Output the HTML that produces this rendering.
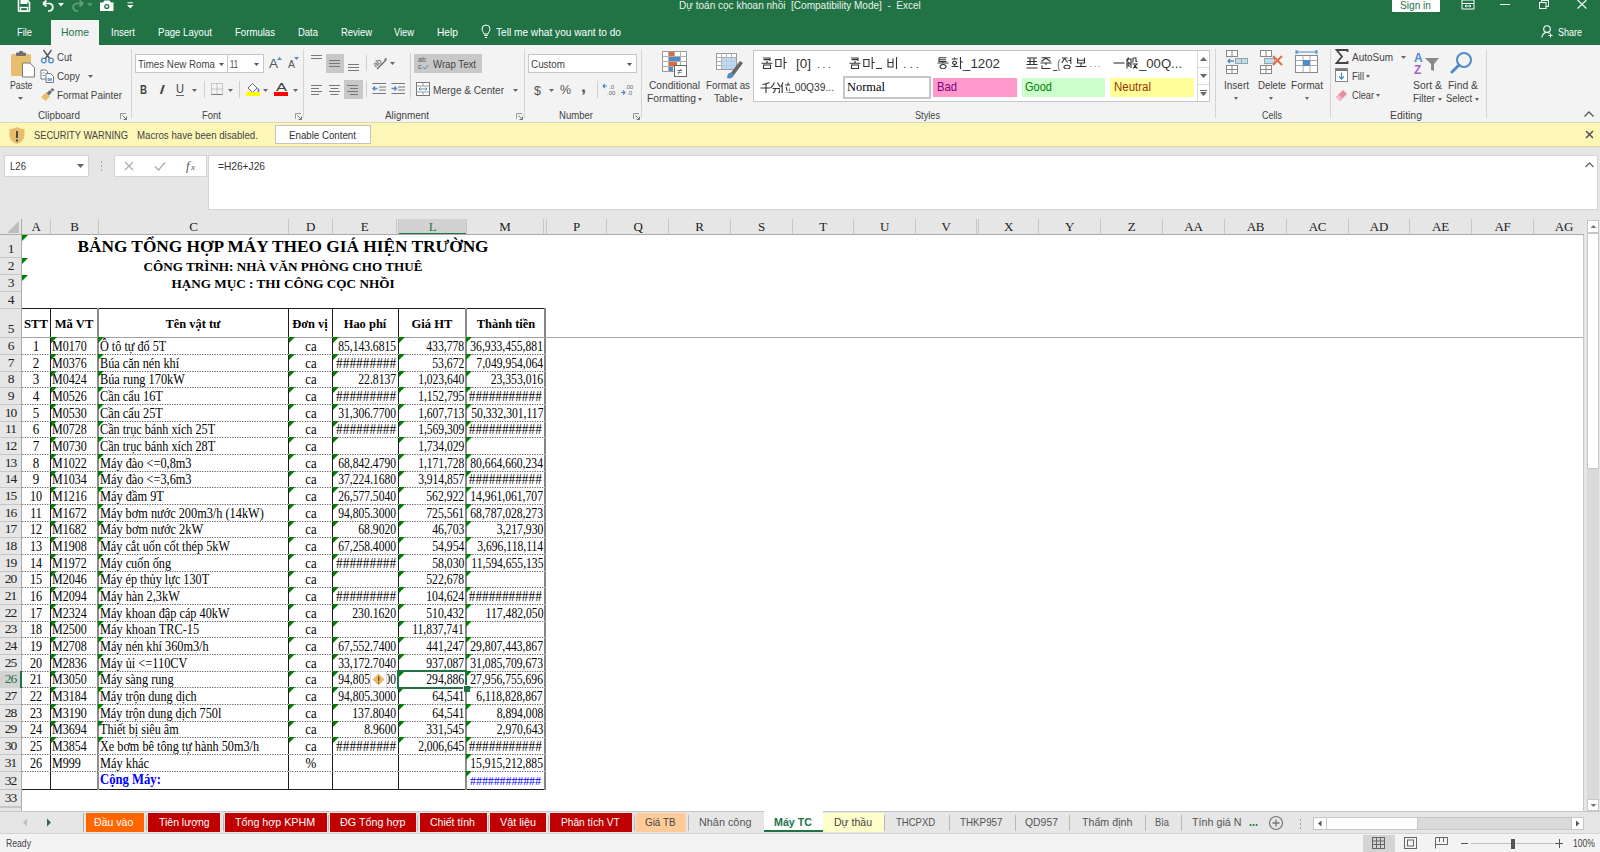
<!DOCTYPE html>
<html><head><meta charset="utf-8"><title>Excel</title>
<style>
*{margin:0;padding:0;box-sizing:border-box}
html,body{width:1600px;height:852px;overflow:hidden;background:#fff}
.r{position:absolute;display:block}
.t{position:absolute;white-space:pre}
</style></head><body>
<div class="r" style="left:0px;top:0px;width:1600px;height:45px;background:#217346;"></div><div class="r" style="left:0px;top:45px;width:1600px;height:77px;background:#F3F3F3;"></div><div class="r" style="left:0px;top:122px;width:1600px;height:1px;background:#DCD9B4;"></div><div class="r" style="left:0px;top:123px;width:1600px;height:23px;background:#FCF7B6;"></div><div class="r" style="left:0px;top:146px;width:1600px;height:1px;background:#DDD79C;"></div><div class="r" style="left:0px;top:147px;width:1600px;height:72px;background:#E6E6E6;"></div><div class="r" style="left:0px;top:219px;width:1587px;height:16px;background:#E6E6E6;"></div><div class="r" style="left:0px;top:235px;width:21px;height:576px;background:#E6E6E6;"></div><div class="r" style="left:22px;top:235px;width:1562px;height:576px;background:#FFFFFF;"></div><div class="r" style="left:399px;top:219px;width:67px;height:15px;background:#D2D2D2;"></div><div class="r" style="left:399px;top:233px;width:67px;height:2px;background:#217346;"></div><div class="r" style="left:0px;top:234px;width:1584px;height:1px;background:#ABABAB;"></div><div class="r" style="left:50px;top:219px;width:1px;height:15px;background:#C6C6C6;"></div><div class="r" style="left:98px;top:219px;width:1px;height:15px;background:#C6C6C6;"></div><div class="r" style="left:288px;top:219px;width:1px;height:15px;background:#C6C6C6;"></div><div class="r" style="left:332px;top:219px;width:1px;height:15px;background:#C6C6C6;"></div><div class="r" style="left:396px;top:219px;width:1px;height:15px;background:#C6C6C6;"></div><div class="r" style="left:466px;top:219px;width:1px;height:15px;background:#C6C6C6;"></div><div class="r" style="left:543px;top:219px;width:1px;height:15px;background:#C6C6C6;"></div><div class="r" style="left:606px;top:219px;width:1px;height:15px;background:#C6C6C6;"></div><div class="r" style="left:668px;top:219px;width:1px;height:15px;background:#C6C6C6;"></div><div class="r" style="left:730px;top:219px;width:1px;height:15px;background:#C6C6C6;"></div><div class="r" style="left:792px;top:219px;width:1px;height:15px;background:#C6C6C6;"></div><div class="r" style="left:853px;top:219px;width:1px;height:15px;background:#C6C6C6;"></div><div class="r" style="left:915px;top:219px;width:1px;height:15px;background:#C6C6C6;"></div><div class="r" style="left:976px;top:219px;width:1px;height:15px;background:#C6C6C6;"></div><div class="r" style="left:1038px;top:219px;width:1px;height:15px;background:#C6C6C6;"></div><div class="r" style="left:1100px;top:219px;width:1px;height:15px;background:#C6C6C6;"></div><div class="r" style="left:1162px;top:219px;width:1px;height:15px;background:#C6C6C6;"></div><div class="r" style="left:1224px;top:219px;width:1px;height:15px;background:#C6C6C6;"></div><div class="r" style="left:1286px;top:219px;width:1px;height:15px;background:#C6C6C6;"></div><div class="r" style="left:1348px;top:219px;width:1px;height:15px;background:#C6C6C6;"></div><div class="r" style="left:1409px;top:219px;width:1px;height:15px;background:#C6C6C6;"></div><div class="r" style="left:1471px;top:219px;width:1px;height:15px;background:#C6C6C6;"></div><div class="r" style="left:1533px;top:219px;width:1px;height:15px;background:#C6C6C6;"></div><div class="r" style="left:398px;top:219px;width:1px;height:15px;background:#C6C6C6;"></div><div class="r" style="left:546px;top:219px;width:1px;height:15px;background:#C6C6C6;"></div><div class="r" style="left:978px;top:219px;width:1px;height:15px;background:#C6C6C6;"></div><div class="r" style="left:21px;top:219px;width:1px;height:592px;background:#ABABAB;"></div><div class="t" style="top:220.11px;font:13px/13px 'Liberation Serif',serif;color:#222;letter-spacing:-0.2px;left:-4.00px;width:80px;text-align:center;">A</div><div class="t" style="top:220.11px;font:13px/13px 'Liberation Serif',serif;color:#222;letter-spacing:-0.2px;left:34.50px;width:80px;text-align:center;">B</div><div class="t" style="top:220.11px;font:13px/13px 'Liberation Serif',serif;color:#222;letter-spacing:-0.2px;left:153.50px;width:80px;text-align:center;">C</div><div class="t" style="top:220.11px;font:13px/13px 'Liberation Serif',serif;color:#222;letter-spacing:-0.2px;left:270.50px;width:80px;text-align:center;">D</div><div class="t" style="top:220.11px;font:13px/13px 'Liberation Serif',serif;color:#222;letter-spacing:-0.2px;left:324.50px;width:80px;text-align:center;">E</div><div class="t" style="top:220.11px;font:13px/13px 'Liberation Serif',serif;color:#217346;letter-spacing:-0.2px;left:392.50px;width:80px;text-align:center;">L</div><div class="t" style="top:220.11px;font:13px/13px 'Liberation Serif',serif;color:#222;letter-spacing:-0.2px;left:465.00px;width:80px;text-align:center;">M</div><div class="t" style="top:220.11px;font:13px/13px 'Liberation Serif',serif;color:#222;letter-spacing:-0.2px;left:536.50px;width:80px;text-align:center;">P</div><div class="t" style="top:220.11px;font:13px/13px 'Liberation Serif',serif;color:#222;letter-spacing:-0.2px;left:598.00px;width:80px;text-align:center;">Q</div><div class="t" style="top:220.11px;font:13px/13px 'Liberation Serif',serif;color:#222;letter-spacing:-0.2px;left:659.50px;width:80px;text-align:center;">R</div><div class="t" style="top:220.11px;font:13px/13px 'Liberation Serif',serif;color:#222;letter-spacing:-0.2px;left:721.50px;width:80px;text-align:center;">S</div><div class="t" style="top:220.11px;font:13px/13px 'Liberation Serif',serif;color:#222;letter-spacing:-0.2px;left:783.00px;width:80px;text-align:center;">T</div><div class="t" style="top:220.11px;font:13px/13px 'Liberation Serif',serif;color:#222;letter-spacing:-0.2px;left:844.50px;width:80px;text-align:center;">U</div><div class="t" style="top:220.11px;font:13px/13px 'Liberation Serif',serif;color:#222;letter-spacing:-0.2px;left:906.00px;width:80px;text-align:center;">V</div><div class="t" style="top:220.11px;font:13px/13px 'Liberation Serif',serif;color:#222;letter-spacing:-0.2px;left:968.50px;width:80px;text-align:center;">X</div><div class="t" style="top:220.11px;font:13px/13px 'Liberation Serif',serif;color:#222;letter-spacing:-0.2px;left:1029.50px;width:80px;text-align:center;">Y</div><div class="t" style="top:220.11px;font:13px/13px 'Liberation Serif',serif;color:#222;letter-spacing:-0.2px;left:1091.50px;width:80px;text-align:center;">Z</div><div class="t" style="top:220.11px;font:13px/13px 'Liberation Serif',serif;color:#222;letter-spacing:-0.2px;left:1153.50px;width:80px;text-align:center;">AA</div><div class="t" style="top:220.11px;font:13px/13px 'Liberation Serif',serif;color:#222;letter-spacing:-0.2px;left:1215.50px;width:80px;text-align:center;">AB</div><div class="t" style="top:220.11px;font:13px/13px 'Liberation Serif',serif;color:#222;letter-spacing:-0.2px;left:1277.50px;width:80px;text-align:center;">AC</div><div class="t" style="top:220.11px;font:13px/13px 'Liberation Serif',serif;color:#222;letter-spacing:-0.2px;left:1339.00px;width:80px;text-align:center;">AD</div><div class="t" style="top:220.11px;font:13px/13px 'Liberation Serif',serif;color:#222;letter-spacing:-0.2px;left:1400.50px;width:80px;text-align:center;">AE</div><div class="t" style="top:220.11px;font:13px/13px 'Liberation Serif',serif;color:#222;letter-spacing:-0.2px;left:1462.50px;width:80px;text-align:center;">AF</div><div class="t" style="top:220.11px;font:13px/13px 'Liberation Serif',serif;color:#222;letter-spacing:-0.2px;left:1524.00px;width:80px;text-align:center;">AG</div><svg class="r" style="left:4px;top:220px;" width="16" height="14" viewBox="0 0 16 14"><path d="M15 1 L15 13 L3 13 Z" fill="#BDBDBD"/></svg><div class="r" style="left:0px;top:257px;width:21px;height:1px;background:#C6C6C6;"></div><div class="t" style="top:242.49px;font:13.5px/13.5px 'Liberation Serif',serif;color:#222;letter-spacing:-1.0px;left:0.00px;width:22px;text-align:center;text-indent:-1px;">1</div><div class="r" style="left:0px;top:274px;width:21px;height:1px;background:#C6C6C6;"></div><div class="t" style="top:259.49px;font:13.5px/13.5px 'Liberation Serif',serif;color:#222;letter-spacing:-1.0px;left:0.00px;width:22px;text-align:center;text-indent:-1px;">2</div><div class="r" style="left:0px;top:291px;width:21px;height:1px;background:#C6C6C6;"></div><div class="t" style="top:276.49px;font:13.5px/13.5px 'Liberation Serif',serif;color:#222;letter-spacing:-1.0px;left:0.00px;width:22px;text-align:center;text-indent:-1px;">3</div><div class="r" style="left:0px;top:308px;width:21px;height:1px;background:#C6C6C6;"></div><div class="t" style="top:293.49px;font:13.5px/13.5px 'Liberation Serif',serif;color:#222;letter-spacing:-1.0px;left:0.00px;width:22px;text-align:center;text-indent:-1px;">4</div><div class="r" style="left:0px;top:337px;width:21px;height:1px;background:#C6C6C6;"></div><div class="t" style="top:321.99px;font:13.5px/13.5px 'Liberation Serif',serif;color:#222;letter-spacing:-1.0px;left:0.00px;width:22px;text-align:center;text-indent:-1px;">5</div><div class="r" style="left:0px;top:354px;width:21px;height:1px;background:#C6C6C6;"></div><div class="t" style="top:339.49px;font:13.5px/13.5px 'Liberation Serif',serif;color:#222;letter-spacing:-1.0px;left:0.00px;width:22px;text-align:center;text-indent:-1px;">6</div><div class="r" style="left:0px;top:371px;width:21px;height:1px;background:#C6C6C6;"></div><div class="t" style="top:356.49px;font:13.5px/13.5px 'Liberation Serif',serif;color:#222;letter-spacing:-1.0px;left:0.00px;width:22px;text-align:center;text-indent:-1px;">7</div><div class="r" style="left:0px;top:387px;width:21px;height:1px;background:#C6C6C6;"></div><div class="t" style="top:372.49px;font:13.5px/13.5px 'Liberation Serif',serif;color:#222;letter-spacing:-1.0px;left:0.00px;width:22px;text-align:center;text-indent:-1px;">8</div><div class="r" style="left:0px;top:404px;width:21px;height:1px;background:#C6C6C6;"></div><div class="t" style="top:389.49px;font:13.5px/13.5px 'Liberation Serif',serif;color:#222;letter-spacing:-1.0px;left:0.00px;width:22px;text-align:center;text-indent:-1px;">9</div><div class="r" style="left:0px;top:421px;width:21px;height:1px;background:#C6C6C6;"></div><div class="t" style="top:406.49px;font:13.5px/13.5px 'Liberation Serif',serif;color:#222;letter-spacing:-1.0px;left:0.00px;width:22px;text-align:center;text-indent:-1px;">10</div><div class="r" style="left:0px;top:437px;width:21px;height:1px;background:#C6C6C6;"></div><div class="t" style="top:422.49px;font:13.5px/13.5px 'Liberation Serif',serif;color:#222;letter-spacing:-1.0px;left:0.00px;width:22px;text-align:center;text-indent:-1px;">11</div><div class="r" style="left:0px;top:454px;width:21px;height:1px;background:#C6C6C6;"></div><div class="t" style="top:439.49px;font:13.5px/13.5px 'Liberation Serif',serif;color:#222;letter-spacing:-1.0px;left:0.00px;width:22px;text-align:center;text-indent:-1px;">12</div><div class="r" style="left:0px;top:471px;width:21px;height:1px;background:#C6C6C6;"></div><div class="t" style="top:456.49px;font:13.5px/13.5px 'Liberation Serif',serif;color:#222;letter-spacing:-1.0px;left:0.00px;width:22px;text-align:center;text-indent:-1px;">13</div><div class="r" style="left:0px;top:487px;width:21px;height:1px;background:#C6C6C6;"></div><div class="t" style="top:472.49px;font:13.5px/13.5px 'Liberation Serif',serif;color:#222;letter-spacing:-1.0px;left:0.00px;width:22px;text-align:center;text-indent:-1px;">14</div><div class="r" style="left:0px;top:504px;width:21px;height:1px;background:#C6C6C6;"></div><div class="t" style="top:489.49px;font:13.5px/13.5px 'Liberation Serif',serif;color:#222;letter-spacing:-1.0px;left:0.00px;width:22px;text-align:center;text-indent:-1px;">15</div><div class="r" style="left:0px;top:521px;width:21px;height:1px;background:#C6C6C6;"></div><div class="t" style="top:506.49px;font:13.5px/13.5px 'Liberation Serif',serif;color:#222;letter-spacing:-1.0px;left:0.00px;width:22px;text-align:center;text-indent:-1px;">16</div><div class="r" style="left:0px;top:537px;width:21px;height:1px;background:#C6C6C6;"></div><div class="t" style="top:522.49px;font:13.5px/13.5px 'Liberation Serif',serif;color:#222;letter-spacing:-1.0px;left:0.00px;width:22px;text-align:center;text-indent:-1px;">17</div><div class="r" style="left:0px;top:554px;width:21px;height:1px;background:#C6C6C6;"></div><div class="t" style="top:539.49px;font:13.5px/13.5px 'Liberation Serif',serif;color:#222;letter-spacing:-1.0px;left:0.00px;width:22px;text-align:center;text-indent:-1px;">18</div><div class="r" style="left:0px;top:571px;width:21px;height:1px;background:#C6C6C6;"></div><div class="t" style="top:556.49px;font:13.5px/13.5px 'Liberation Serif',serif;color:#222;letter-spacing:-1.0px;left:0.00px;width:22px;text-align:center;text-indent:-1px;">19</div><div class="r" style="left:0px;top:587px;width:21px;height:1px;background:#C6C6C6;"></div><div class="t" style="top:572.49px;font:13.5px/13.5px 'Liberation Serif',serif;color:#222;letter-spacing:-1.0px;left:0.00px;width:22px;text-align:center;text-indent:-1px;">20</div><div class="r" style="left:0px;top:604px;width:21px;height:1px;background:#C6C6C6;"></div><div class="t" style="top:589.49px;font:13.5px/13.5px 'Liberation Serif',serif;color:#222;letter-spacing:-1.0px;left:0.00px;width:22px;text-align:center;text-indent:-1px;">21</div><div class="r" style="left:0px;top:621px;width:21px;height:1px;background:#C6C6C6;"></div><div class="t" style="top:606.49px;font:13.5px/13.5px 'Liberation Serif',serif;color:#222;letter-spacing:-1.0px;left:0.00px;width:22px;text-align:center;text-indent:-1px;">22</div><div class="r" style="left:0px;top:637px;width:21px;height:1px;background:#C6C6C6;"></div><div class="t" style="top:622.49px;font:13.5px/13.5px 'Liberation Serif',serif;color:#222;letter-spacing:-1.0px;left:0.00px;width:22px;text-align:center;text-indent:-1px;">23</div><div class="r" style="left:0px;top:654px;width:21px;height:1px;background:#C6C6C6;"></div><div class="t" style="top:639.49px;font:13.5px/13.5px 'Liberation Serif',serif;color:#222;letter-spacing:-1.0px;left:0.00px;width:22px;text-align:center;text-indent:-1px;">24</div><div class="r" style="left:0px;top:671px;width:21px;height:1px;background:#C6C6C6;"></div><div class="t" style="top:656.49px;font:13.5px/13.5px 'Liberation Serif',serif;color:#222;letter-spacing:-1.0px;left:0.00px;width:22px;text-align:center;text-indent:-1px;">25</div><div class="r" style="left:0px;top:687px;width:21px;height:1px;background:#C6C6C6;"></div><div class="t" style="top:672.49px;font:13.5px/13.5px 'Liberation Serif',serif;color:#217346;letter-spacing:-1.0px;left:0.00px;width:22px;text-align:center;text-indent:-1px;">26</div><div class="r" style="left:0px;top:704px;width:21px;height:1px;background:#C6C6C6;"></div><div class="t" style="top:689.49px;font:13.5px/13.5px 'Liberation Serif',serif;color:#222;letter-spacing:-1.0px;left:0.00px;width:22px;text-align:center;text-indent:-1px;">27</div><div class="r" style="left:0px;top:721px;width:21px;height:1px;background:#C6C6C6;"></div><div class="t" style="top:706.49px;font:13.5px/13.5px 'Liberation Serif',serif;color:#222;letter-spacing:-1.0px;left:0.00px;width:22px;text-align:center;text-indent:-1px;">28</div><div class="r" style="left:0px;top:737px;width:21px;height:1px;background:#C6C6C6;"></div><div class="t" style="top:722.49px;font:13.5px/13.5px 'Liberation Serif',serif;color:#222;letter-spacing:-1.0px;left:0.00px;width:22px;text-align:center;text-indent:-1px;">29</div><div class="r" style="left:0px;top:754px;width:21px;height:1px;background:#C6C6C6;"></div><div class="t" style="top:739.49px;font:13.5px/13.5px 'Liberation Serif',serif;color:#222;letter-spacing:-1.0px;left:0.00px;width:22px;text-align:center;text-indent:-1px;">30</div><div class="r" style="left:0px;top:771px;width:21px;height:1px;background:#C6C6C6;"></div><div class="t" style="top:756.49px;font:13.5px/13.5px 'Liberation Serif',serif;color:#222;letter-spacing:-1.0px;left:0.00px;width:22px;text-align:center;text-indent:-1px;">31</div><div class="r" style="left:0px;top:789px;width:21px;height:1px;background:#C6C6C6;"></div><div class="t" style="top:774.49px;font:13.5px/13.5px 'Liberation Serif',serif;color:#222;letter-spacing:-1.0px;left:0.00px;width:22px;text-align:center;text-indent:-1px;">32</div><div class="r" style="left:0px;top:806px;width:21px;height:1px;background:#C6C6C6;"></div><div class="t" style="top:791.49px;font:13.5px/13.5px 'Liberation Serif',serif;color:#222;letter-spacing:-1.0px;left:0.00px;width:22px;text-align:center;text-indent:-1px;">33</div><div class="r" style="left:0px;top:671px;width:21px;height:17px;background:#D2D2D2;"></div><div class="r" style="left:20px;top:671px;width:2px;height:17px;background:#217346;"></div><div class="t" style="top:672.49px;font:13.5px/13.5px 'Liberation Serif',serif;color:#217346;letter-spacing:-1.0px;left:0.00px;width:22px;text-align:center;text-indent:-1px;">26</div><div class="r" style="left:0px;top:807px;width:21px;height:1px;background:#C6C6C6;"></div><div class="r" style="left:22px;top:337px;width:1562px;height:1px;background:#A6A6A6;"></div><div class="r" style="left:1584px;top:235px;width:3px;height:576px;background:#E6E6E6;"></div><div class="r" style="left:1587px;top:219px;width:13px;height:592px;background:#E6E6E6;"></div><div class="r" style="left:1587px;top:220px;width:12px;height:13px;background:#FFFFFF;border:1px solid #C6C6C6;"></div><svg class="r" style="left:1589px;top:222px;" width="9" height="9" viewBox="0 0 9 9"><path d="M1.5 6 L4.5 3 L7.5 6 Z" fill="#777"/></svg><div class="r" style="left:1587px;top:233px;width:12px;height:578px;background:#DADADA;"></div><div class="r" style="left:1587px;top:233px;width:12px;height:236px;background:#FFFFFF;border:1px solid #C6C6C6;"></div><div class="r" style="left:1587px;top:799px;width:12px;height:12px;background:#FFFFFF;border:1px solid #C6C6C6;"></div><svg class="r" style="left:1589px;top:801px;" width="9" height="9" viewBox="0 0 9 9"><path d="M1.5 3 L4.5 6 L7.5 3 Z" fill="#777"/></svg><div class="r" style="left:1583px;top:235px;width:1px;height:577px;background:#C6C6C6;"></div><div class="t" style="top:238.11px;font:bold 17.3px/17.3px 'Liberation Serif',serif;color:#000;left:-17.00px;width:600px;text-align:center;">BẢNG TỔNG HỢP MÁY THEO GIÁ HIỆN TRƯỜNG</div><div class="t" style="top:259.89px;font:bold 13.15px/13.15px 'Liberation Serif',serif;color:#000;left:-17.00px;width:600px;text-align:center;">CÔNG TRÌNH: NHÀ VĂN PHÒNG CHO THUÊ</div><div class="t" style="top:276.75px;font:bold 13.2px/13.2px 'Liberation Serif',serif;color:#000;left:-17.00px;width:600px;text-align:center;">HẠNG MỤC : THI CÔNG CỌC NHỒI</div><svg class="r" style="left:22px;top:235px;" width="6" height="6" viewBox="0 0 6 6"><path d="M0 0 L6 0 L0 6 Z" fill="#008000"/></svg><svg class="r" style="left:22px;top:258px;" width="6" height="6" viewBox="0 0 6 6"><path d="M0 0 L6 0 L0 6 Z" fill="#008000"/></svg><svg class="r" style="left:22px;top:275px;" width="6" height="6" viewBox="0 0 6 6"><path d="M0 0 L6 0 L0 6 Z" fill="#008000"/></svg><div class="r" style="left:22px;top:308px;width:524px;height:1px;background:#1a1a1a;"></div><div class="r" style="left:22px;top:789px;width:524px;height:1px;background:#1a1a1a;"></div><div class="r" style="left:50px;top:308px;width:1px;height:482px;background:#1a1a1a;"></div><div class="r" style="left:97px;top:308px;width:2px;height:482px;background:#8c8c8c;"></div><div class="r" style="left:288px;top:308px;width:1px;height:482px;background:#1a1a1a;"></div><div class="r" style="left:332px;top:308px;width:1px;height:482px;background:#1a1a1a;"></div><div class="r" style="left:398px;top:308px;width:1px;height:482px;background:#1a1a1a;"></div><div class="r" style="left:465px;top:308px;width:2px;height:482px;background:#8c8c8c;"></div><div class="r" style="left:544px;top:308px;width:2px;height:482px;background:#858585;"></div><div class="r" style="left:22px;top:337px;width:523px;height:1px;background:#A0A0A0;"></div><div class="r" style="left:22px;top:354px;width:523px;height:1px;background:repeating-linear-gradient(90deg,#6e6e6e 0 1px,#cfcfcf 1px 3px,#6e6e6e 3px 4px,#ffffff 4px 5px);"></div><div class="r" style="left:22px;top:371px;width:523px;height:1px;background:repeating-linear-gradient(90deg,#6e6e6e 0 1px,#cfcfcf 1px 3px,#6e6e6e 3px 4px,#ffffff 4px 5px);"></div><div class="r" style="left:22px;top:387px;width:523px;height:1px;background:repeating-linear-gradient(90deg,#6e6e6e 0 1px,#cfcfcf 1px 3px,#6e6e6e 3px 4px,#ffffff 4px 5px);"></div><div class="r" style="left:22px;top:404px;width:523px;height:1px;background:repeating-linear-gradient(90deg,#6e6e6e 0 1px,#cfcfcf 1px 3px,#6e6e6e 3px 4px,#ffffff 4px 5px);"></div><div class="r" style="left:22px;top:421px;width:523px;height:1px;background:repeating-linear-gradient(90deg,#6e6e6e 0 1px,#cfcfcf 1px 3px,#6e6e6e 3px 4px,#ffffff 4px 5px);"></div><div class="r" style="left:22px;top:437px;width:523px;height:1px;background:repeating-linear-gradient(90deg,#6e6e6e 0 1px,#cfcfcf 1px 3px,#6e6e6e 3px 4px,#ffffff 4px 5px);"></div><div class="r" style="left:22px;top:454px;width:523px;height:1px;background:repeating-linear-gradient(90deg,#6e6e6e 0 1px,#cfcfcf 1px 3px,#6e6e6e 3px 4px,#ffffff 4px 5px);"></div><div class="r" style="left:22px;top:471px;width:523px;height:1px;background:repeating-linear-gradient(90deg,#6e6e6e 0 1px,#cfcfcf 1px 3px,#6e6e6e 3px 4px,#ffffff 4px 5px);"></div><div class="r" style="left:22px;top:487px;width:523px;height:1px;background:repeating-linear-gradient(90deg,#6e6e6e 0 1px,#cfcfcf 1px 3px,#6e6e6e 3px 4px,#ffffff 4px 5px);"></div><div class="r" style="left:22px;top:504px;width:523px;height:1px;background:repeating-linear-gradient(90deg,#6e6e6e 0 1px,#cfcfcf 1px 3px,#6e6e6e 3px 4px,#ffffff 4px 5px);"></div><div class="r" style="left:22px;top:521px;width:523px;height:1px;background:repeating-linear-gradient(90deg,#6e6e6e 0 1px,#cfcfcf 1px 3px,#6e6e6e 3px 4px,#ffffff 4px 5px);"></div><div class="r" style="left:22px;top:537px;width:523px;height:1px;background:repeating-linear-gradient(90deg,#6e6e6e 0 1px,#cfcfcf 1px 3px,#6e6e6e 3px 4px,#ffffff 4px 5px);"></div><div class="r" style="left:22px;top:554px;width:523px;height:1px;background:repeating-linear-gradient(90deg,#6e6e6e 0 1px,#cfcfcf 1px 3px,#6e6e6e 3px 4px,#ffffff 4px 5px);"></div><div class="r" style="left:22px;top:571px;width:523px;height:1px;background:repeating-linear-gradient(90deg,#6e6e6e 0 1px,#cfcfcf 1px 3px,#6e6e6e 3px 4px,#ffffff 4px 5px);"></div><div class="r" style="left:22px;top:587px;width:523px;height:1px;background:repeating-linear-gradient(90deg,#6e6e6e 0 1px,#cfcfcf 1px 3px,#6e6e6e 3px 4px,#ffffff 4px 5px);"></div><div class="r" style="left:22px;top:604px;width:523px;height:1px;background:repeating-linear-gradient(90deg,#6e6e6e 0 1px,#cfcfcf 1px 3px,#6e6e6e 3px 4px,#ffffff 4px 5px);"></div><div class="r" style="left:22px;top:621px;width:523px;height:1px;background:repeating-linear-gradient(90deg,#6e6e6e 0 1px,#cfcfcf 1px 3px,#6e6e6e 3px 4px,#ffffff 4px 5px);"></div><div class="r" style="left:22px;top:637px;width:523px;height:1px;background:repeating-linear-gradient(90deg,#6e6e6e 0 1px,#cfcfcf 1px 3px,#6e6e6e 3px 4px,#ffffff 4px 5px);"></div><div class="r" style="left:22px;top:654px;width:523px;height:1px;background:repeating-linear-gradient(90deg,#6e6e6e 0 1px,#cfcfcf 1px 3px,#6e6e6e 3px 4px,#ffffff 4px 5px);"></div><div class="r" style="left:22px;top:671px;width:523px;height:1px;background:repeating-linear-gradient(90deg,#6e6e6e 0 1px,#cfcfcf 1px 3px,#6e6e6e 3px 4px,#ffffff 4px 5px);"></div><div class="r" style="left:22px;top:687px;width:523px;height:1px;background:repeating-linear-gradient(90deg,#6e6e6e 0 1px,#cfcfcf 1px 3px,#6e6e6e 3px 4px,#ffffff 4px 5px);"></div><div class="r" style="left:22px;top:704px;width:523px;height:1px;background:repeating-linear-gradient(90deg,#6e6e6e 0 1px,#cfcfcf 1px 3px,#6e6e6e 3px 4px,#ffffff 4px 5px);"></div><div class="r" style="left:22px;top:721px;width:523px;height:1px;background:repeating-linear-gradient(90deg,#6e6e6e 0 1px,#cfcfcf 1px 3px,#6e6e6e 3px 4px,#ffffff 4px 5px);"></div><div class="r" style="left:22px;top:737px;width:523px;height:1px;background:repeating-linear-gradient(90deg,#6e6e6e 0 1px,#cfcfcf 1px 3px,#6e6e6e 3px 4px,#ffffff 4px 5px);"></div><div class="r" style="left:22px;top:754px;width:523px;height:1px;background:repeating-linear-gradient(90deg,#6e6e6e 0 1px,#cfcfcf 1px 3px,#6e6e6e 3px 4px,#ffffff 4px 5px);"></div><div class="r" style="left:22px;top:771px;width:523px;height:1px;background:repeating-linear-gradient(90deg,#6e6e6e 0 1px,#cfcfcf 1px 3px,#6e6e6e 3px 4px,#ffffff 4px 5px);"></div><div class="t" style="top:317.88px;font:bold 12.8px/12.8px 'Liberation Serif',serif;color:#000;left:-64.50px;width:200px;text-align:center;transform:scaleX(0.9920);transform-origin:50% 0;">STT</div><div class="t" style="top:317.88px;font:bold 12.8px/12.8px 'Liberation Serif',serif;color:#000;left:-26.00px;width:200px;text-align:center;transform:scaleX(0.9853);transform-origin:50% 0;">Mã VT</div><div class="t" style="top:317.88px;font:bold 12.8px/12.8px 'Liberation Serif',serif;color:#000;left:93.00px;width:200px;text-align:center;transform:scaleX(0.9678);transform-origin:50% 0;">Tên vật tư</div><div class="t" style="top:317.88px;font:bold 12.8px/12.8px 'Liberation Serif',serif;color:#000;left:210.00px;width:200px;text-align:center;transform:scaleX(0.9752);transform-origin:50% 0;">Đơn vị</div><div class="t" style="top:317.88px;font:bold 12.8px/12.8px 'Liberation Serif',serif;color:#000;left:265.00px;width:200px;text-align:center;transform:scaleX(0.9746);transform-origin:50% 0;">Hao phí</div><div class="t" style="top:317.88px;font:bold 12.8px/12.8px 'Liberation Serif',serif;color:#000;left:332.00px;width:200px;text-align:center;transform:scaleX(0.9793);transform-origin:50% 0;">Giá HT</div><div class="t" style="top:317.88px;font:bold 12.8px/12.8px 'Liberation Serif',serif;color:#000;left:405.50px;width:200px;text-align:center;transform:scaleX(0.9712);transform-origin:50% 0;">Thành tiền</div><div class="t" style="top:339.81px;font:13.6px/13.6px 'Liberation Serif',serif;color:#000;left:16.00px;width:40px;text-align:center;transform:scaleX(0.9563);transform-origin:50% 0;">1</div><div class="t" style="top:339.81px;font:13.6px/13.6px 'Liberation Serif',serif;color:#000;left:52px;transform:scaleX(0.8829);transform-origin:0 0;">M0170</div><div class="t" style="top:339.81px;font:13.6px/13.6px 'Liberation Serif',serif;color:#000;left:100px;transform:scaleX(0.8973);transform-origin:0 0;">Ô tô tự đổ 5T</div><div class="t" style="top:339.81px;font:13.6px/13.6px 'Liberation Serif',serif;color:#000;left:290.50px;width:40px;text-align:center;transform:scaleX(0.9311);transform-origin:50% 0;">ca</div><div class="t" style="top:339.81px;font:13.6px/13.6px 'Liberation Serif',serif;color:#000;right:1204.00px;text-align:right;transform:scaleX(0.8502);transform-origin:100% 0;">85,143.6815</div><div class="t" style="top:339.81px;font:13.6px/13.6px 'Liberation Serif',serif;color:#000;right:1136.00px;text-align:right;transform:scaleX(0.8584);transform-origin:100% 0;">433,778</div><div class="t" style="top:339.81px;font:13.6px/13.6px 'Liberation Serif',serif;color:#000;right:1057.00px;text-align:right;transform:scaleX(0.8551);transform-origin:100% 0;">36,933,455,881</div><svg class="r" style="left:51px;top:337px;" width="6" height="6" viewBox="0 0 6 6"><path d="M0 0 L6 0 L0 6 Z" fill="#008000"/></svg><svg class="r" style="left:98px;top:337px;" width="6" height="6" viewBox="0 0 6 6"><path d="M0 0 L6 0 L0 6 Z" fill="#008000"/></svg><svg class="r" style="left:289px;top:337px;" width="6" height="6" viewBox="0 0 6 6"><path d="M0 0 L6 0 L0 6 Z" fill="#008000"/></svg><svg class="r" style="left:333px;top:337px;" width="6" height="6" viewBox="0 0 6 6"><path d="M0 0 L6 0 L0 6 Z" fill="#008000"/></svg><svg class="r" style="left:399px;top:337px;" width="6" height="6" viewBox="0 0 6 6"><path d="M0 0 L6 0 L0 6 Z" fill="#008000"/></svg><svg class="r" style="left:466px;top:337px;" width="6" height="6" viewBox="0 0 6 6"><path d="M0 0 L6 0 L0 6 Z" fill="#008000"/></svg><div class="t" style="top:356.81px;font:13.6px/13.6px 'Liberation Serif',serif;color:#000;left:16.00px;width:40px;text-align:center;transform:scaleX(0.9563);transform-origin:50% 0;">2</div><div class="t" style="top:356.81px;font:13.6px/13.6px 'Liberation Serif',serif;color:#000;left:52px;transform:scaleX(0.8829);transform-origin:0 0;">M0376</div><div class="t" style="top:356.81px;font:13.6px/13.6px 'Liberation Serif',serif;color:#000;left:100px;transform:scaleX(0.8987);transform-origin:0 0;">Búa căn nén khí</div><div class="t" style="top:356.81px;font:13.6px/13.6px 'Liberation Serif',serif;color:#000;left:290.50px;width:40px;text-align:center;transform:scaleX(0.9311);transform-origin:50% 0;">ca</div><div class="t" style="top:356.81px;font:13.6px/13.6px 'Liberation Serif',serif;color:#000;right:1204.00px;text-align:right;transform:scaleX(0.9825);transform-origin:100% 0;">#########</div><div class="t" style="top:356.81px;font:13.6px/13.6px 'Liberation Serif',serif;color:#000;right:1136.00px;text-align:right;transform:scaleX(0.8598);transform-origin:100% 0;">53,672</div><div class="t" style="top:356.81px;font:13.6px/13.6px 'Liberation Serif',serif;color:#000;right:1057.00px;text-align:right;transform:scaleX(0.8547);transform-origin:100% 0;">7,049,954,064</div><svg class="r" style="left:51px;top:354px;" width="6" height="6" viewBox="0 0 6 6"><path d="M0 0 L6 0 L0 6 Z" fill="#008000"/></svg><svg class="r" style="left:98px;top:354px;" width="6" height="6" viewBox="0 0 6 6"><path d="M0 0 L6 0 L0 6 Z" fill="#008000"/></svg><svg class="r" style="left:289px;top:354px;" width="6" height="6" viewBox="0 0 6 6"><path d="M0 0 L6 0 L0 6 Z" fill="#008000"/></svg><svg class="r" style="left:333px;top:354px;" width="6" height="6" viewBox="0 0 6 6"><path d="M0 0 L6 0 L0 6 Z" fill="#008000"/></svg><svg class="r" style="left:399px;top:354px;" width="6" height="6" viewBox="0 0 6 6"><path d="M0 0 L6 0 L0 6 Z" fill="#008000"/></svg><svg class="r" style="left:466px;top:354px;" width="6" height="6" viewBox="0 0 6 6"><path d="M0 0 L6 0 L0 6 Z" fill="#008000"/></svg><div class="t" style="top:372.81px;font:13.6px/13.6px 'Liberation Serif',serif;color:#000;left:16.00px;width:40px;text-align:center;transform:scaleX(0.9563);transform-origin:50% 0;">3</div><div class="t" style="top:372.81px;font:13.6px/13.6px 'Liberation Serif',serif;color:#000;left:52px;transform:scaleX(0.8829);transform-origin:0 0;">M0424</div><div class="t" style="top:372.81px;font:13.6px/13.6px 'Liberation Serif',serif;color:#000;left:100px;transform:scaleX(0.9061);transform-origin:0 0;">Búa rung 170kW</div><div class="t" style="top:372.81px;font:13.6px/13.6px 'Liberation Serif',serif;color:#000;left:290.50px;width:40px;text-align:center;transform:scaleX(0.9311);transform-origin:50% 0;">ca</div><div class="t" style="top:372.81px;font:13.6px/13.6px 'Liberation Serif',serif;color:#000;right:1204.00px;text-align:right;transform:scaleX(0.8584);transform-origin:100% 0;">22.8137</div><div class="t" style="top:372.81px;font:13.6px/13.6px 'Liberation Serif',serif;color:#000;right:1136.00px;text-align:right;transform:scaleX(0.8501);transform-origin:100% 0;">1,023,640</div><div class="t" style="top:372.81px;font:13.6px/13.6px 'Liberation Serif',serif;color:#000;right:1057.00px;text-align:right;transform:scaleX(0.8590);transform-origin:100% 0;">23,353,016</div><svg class="r" style="left:51px;top:371px;" width="6" height="6" viewBox="0 0 6 6"><path d="M0 0 L6 0 L0 6 Z" fill="#008000"/></svg><svg class="r" style="left:98px;top:371px;" width="6" height="6" viewBox="0 0 6 6"><path d="M0 0 L6 0 L0 6 Z" fill="#008000"/></svg><svg class="r" style="left:289px;top:371px;" width="6" height="6" viewBox="0 0 6 6"><path d="M0 0 L6 0 L0 6 Z" fill="#008000"/></svg><svg class="r" style="left:333px;top:371px;" width="6" height="6" viewBox="0 0 6 6"><path d="M0 0 L6 0 L0 6 Z" fill="#008000"/></svg><svg class="r" style="left:399px;top:371px;" width="6" height="6" viewBox="0 0 6 6"><path d="M0 0 L6 0 L0 6 Z" fill="#008000"/></svg><svg class="r" style="left:466px;top:371px;" width="6" height="6" viewBox="0 0 6 6"><path d="M0 0 L6 0 L0 6 Z" fill="#008000"/></svg><div class="t" style="top:389.81px;font:13.6px/13.6px 'Liberation Serif',serif;color:#000;left:16.00px;width:40px;text-align:center;transform:scaleX(0.9563);transform-origin:50% 0;">4</div><div class="t" style="top:389.81px;font:13.6px/13.6px 'Liberation Serif',serif;color:#000;left:52px;transform:scaleX(0.8829);transform-origin:0 0;">M0526</div><div class="t" style="top:389.81px;font:13.6px/13.6px 'Liberation Serif',serif;color:#000;left:100px;transform:scaleX(0.9043);transform-origin:0 0;">Cần cẩu 16T</div><div class="t" style="top:389.81px;font:13.6px/13.6px 'Liberation Serif',serif;color:#000;left:290.50px;width:40px;text-align:center;transform:scaleX(0.9311);transform-origin:50% 0;">ca</div><div class="t" style="top:389.81px;font:13.6px/13.6px 'Liberation Serif',serif;color:#000;right:1204.00px;text-align:right;transform:scaleX(0.9825);transform-origin:100% 0;">#########</div><div class="t" style="top:389.81px;font:13.6px/13.6px 'Liberation Serif',serif;color:#000;right:1136.00px;text-align:right;transform:scaleX(0.8501);transform-origin:100% 0;">1,152,795</div><div class="t" style="top:389.81px;font:13.6px/13.6px 'Liberation Serif',serif;color:#000;right:1058.00px;text-align:right;transform:scaleX(0.9764);transform-origin:100% 0;">###########</div><svg class="r" style="left:51px;top:387px;" width="6" height="6" viewBox="0 0 6 6"><path d="M0 0 L6 0 L0 6 Z" fill="#008000"/></svg><svg class="r" style="left:98px;top:387px;" width="6" height="6" viewBox="0 0 6 6"><path d="M0 0 L6 0 L0 6 Z" fill="#008000"/></svg><svg class="r" style="left:289px;top:387px;" width="6" height="6" viewBox="0 0 6 6"><path d="M0 0 L6 0 L0 6 Z" fill="#008000"/></svg><svg class="r" style="left:333px;top:387px;" width="6" height="6" viewBox="0 0 6 6"><path d="M0 0 L6 0 L0 6 Z" fill="#008000"/></svg><svg class="r" style="left:399px;top:387px;" width="6" height="6" viewBox="0 0 6 6"><path d="M0 0 L6 0 L0 6 Z" fill="#008000"/></svg><svg class="r" style="left:466px;top:387px;" width="6" height="6" viewBox="0 0 6 6"><path d="M0 0 L6 0 L0 6 Z" fill="#008000"/></svg><div class="t" style="top:406.81px;font:13.6px/13.6px 'Liberation Serif',serif;color:#000;left:16.00px;width:40px;text-align:center;transform:scaleX(0.9563);transform-origin:50% 0;">5</div><div class="t" style="top:406.81px;font:13.6px/13.6px 'Liberation Serif',serif;color:#000;left:52px;transform:scaleX(0.8829);transform-origin:0 0;">M0530</div><div class="t" style="top:406.81px;font:13.6px/13.6px 'Liberation Serif',serif;color:#000;left:100px;transform:scaleX(0.9043);transform-origin:0 0;">Cần cẩu 25T</div><div class="t" style="top:406.81px;font:13.6px/13.6px 'Liberation Serif',serif;color:#000;left:290.50px;width:40px;text-align:center;transform:scaleX(0.9311);transform-origin:50% 0;">ca</div><div class="t" style="top:406.81px;font:13.6px/13.6px 'Liberation Serif',serif;color:#000;right:1204.00px;text-align:right;transform:scaleX(0.8502);transform-origin:100% 0;">31,306.7700</div><div class="t" style="top:406.81px;font:13.6px/13.6px 'Liberation Serif',serif;color:#000;right:1136.00px;text-align:right;transform:scaleX(0.8501);transform-origin:100% 0;">1,607,713</div><div class="t" style="top:406.81px;font:13.6px/13.6px 'Liberation Serif',serif;color:#000;right:1057.00px;text-align:right;transform:scaleX(0.8544);transform-origin:100% 0;">50,332,301,117</div><svg class="r" style="left:51px;top:404px;" width="6" height="6" viewBox="0 0 6 6"><path d="M0 0 L6 0 L0 6 Z" fill="#008000"/></svg><svg class="r" style="left:98px;top:404px;" width="6" height="6" viewBox="0 0 6 6"><path d="M0 0 L6 0 L0 6 Z" fill="#008000"/></svg><svg class="r" style="left:289px;top:404px;" width="6" height="6" viewBox="0 0 6 6"><path d="M0 0 L6 0 L0 6 Z" fill="#008000"/></svg><svg class="r" style="left:333px;top:404px;" width="6" height="6" viewBox="0 0 6 6"><path d="M0 0 L6 0 L0 6 Z" fill="#008000"/></svg><svg class="r" style="left:399px;top:404px;" width="6" height="6" viewBox="0 0 6 6"><path d="M0 0 L6 0 L0 6 Z" fill="#008000"/></svg><svg class="r" style="left:466px;top:404px;" width="6" height="6" viewBox="0 0 6 6"><path d="M0 0 L6 0 L0 6 Z" fill="#008000"/></svg><div class="t" style="top:422.81px;font:13.6px/13.6px 'Liberation Serif',serif;color:#000;left:16.00px;width:40px;text-align:center;transform:scaleX(0.9563);transform-origin:50% 0;">6</div><div class="t" style="top:422.81px;font:13.6px/13.6px 'Liberation Serif',serif;color:#000;left:52px;transform:scaleX(0.8829);transform-origin:0 0;">M0728</div><div class="t" style="top:422.81px;font:13.6px/13.6px 'Liberation Serif',serif;color:#000;left:100px;transform:scaleX(0.8970);transform-origin:0 0;">Cần trục bánh xích 25T</div><div class="t" style="top:422.81px;font:13.6px/13.6px 'Liberation Serif',serif;color:#000;left:290.50px;width:40px;text-align:center;transform:scaleX(0.9311);transform-origin:50% 0;">ca</div><div class="t" style="top:422.81px;font:13.6px/13.6px 'Liberation Serif',serif;color:#000;right:1204.00px;text-align:right;transform:scaleX(0.9825);transform-origin:100% 0;">#########</div><div class="t" style="top:422.81px;font:13.6px/13.6px 'Liberation Serif',serif;color:#000;right:1136.00px;text-align:right;transform:scaleX(0.8501);transform-origin:100% 0;">1,569,309</div><div class="t" style="top:422.81px;font:13.6px/13.6px 'Liberation Serif',serif;color:#000;right:1058.00px;text-align:right;transform:scaleX(0.9764);transform-origin:100% 0;">###########</div><svg class="r" style="left:51px;top:421px;" width="6" height="6" viewBox="0 0 6 6"><path d="M0 0 L6 0 L0 6 Z" fill="#008000"/></svg><svg class="r" style="left:98px;top:421px;" width="6" height="6" viewBox="0 0 6 6"><path d="M0 0 L6 0 L0 6 Z" fill="#008000"/></svg><svg class="r" style="left:289px;top:421px;" width="6" height="6" viewBox="0 0 6 6"><path d="M0 0 L6 0 L0 6 Z" fill="#008000"/></svg><svg class="r" style="left:333px;top:421px;" width="6" height="6" viewBox="0 0 6 6"><path d="M0 0 L6 0 L0 6 Z" fill="#008000"/></svg><svg class="r" style="left:399px;top:421px;" width="6" height="6" viewBox="0 0 6 6"><path d="M0 0 L6 0 L0 6 Z" fill="#008000"/></svg><svg class="r" style="left:466px;top:421px;" width="6" height="6" viewBox="0 0 6 6"><path d="M0 0 L6 0 L0 6 Z" fill="#008000"/></svg><div class="t" style="top:439.81px;font:13.6px/13.6px 'Liberation Serif',serif;color:#000;left:16.00px;width:40px;text-align:center;transform:scaleX(0.9563);transform-origin:50% 0;">7</div><div class="t" style="top:439.81px;font:13.6px/13.6px 'Liberation Serif',serif;color:#000;left:52px;transform:scaleX(0.8829);transform-origin:0 0;">M0730</div><div class="t" style="top:439.81px;font:13.6px/13.6px 'Liberation Serif',serif;color:#000;left:100px;transform:scaleX(0.8970);transform-origin:0 0;">Cần trục bánh xích 28T</div><div class="t" style="top:439.81px;font:13.6px/13.6px 'Liberation Serif',serif;color:#000;left:290.50px;width:40px;text-align:center;transform:scaleX(0.9311);transform-origin:50% 0;">ca</div><div class="t" style="top:439.81px;font:13.6px/13.6px 'Liberation Serif',serif;color:#000;right:1136.00px;text-align:right;transform:scaleX(0.8501);transform-origin:100% 0;">1,734,029</div><svg class="r" style="left:51px;top:437px;" width="6" height="6" viewBox="0 0 6 6"><path d="M0 0 L6 0 L0 6 Z" fill="#008000"/></svg><svg class="r" style="left:98px;top:437px;" width="6" height="6" viewBox="0 0 6 6"><path d="M0 0 L6 0 L0 6 Z" fill="#008000"/></svg><svg class="r" style="left:289px;top:437px;" width="6" height="6" viewBox="0 0 6 6"><path d="M0 0 L6 0 L0 6 Z" fill="#008000"/></svg><svg class="r" style="left:333px;top:437px;" width="6" height="6" viewBox="0 0 6 6"><path d="M0 0 L6 0 L0 6 Z" fill="#008000"/></svg><svg class="r" style="left:399px;top:437px;" width="6" height="6" viewBox="0 0 6 6"><path d="M0 0 L6 0 L0 6 Z" fill="#008000"/></svg><svg class="r" style="left:466px;top:437px;" width="6" height="6" viewBox="0 0 6 6"><path d="M0 0 L6 0 L0 6 Z" fill="#008000"/></svg><div class="t" style="top:456.81px;font:13.6px/13.6px 'Liberation Serif',serif;color:#000;left:16.00px;width:40px;text-align:center;transform:scaleX(0.9563);transform-origin:50% 0;">8</div><div class="t" style="top:456.81px;font:13.6px/13.6px 'Liberation Serif',serif;color:#000;left:52px;transform:scaleX(0.8829);transform-origin:0 0;">M1022</div><div class="t" style="top:456.81px;font:13.6px/13.6px 'Liberation Serif',serif;color:#000;left:100px;transform:scaleX(0.9059);transform-origin:0 0;">Máy đào &lt;=0,8m3</div><div class="t" style="top:456.81px;font:13.6px/13.6px 'Liberation Serif',serif;color:#000;left:290.50px;width:40px;text-align:center;transform:scaleX(0.9311);transform-origin:50% 0;">ca</div><div class="t" style="top:456.81px;font:13.6px/13.6px 'Liberation Serif',serif;color:#000;right:1204.00px;text-align:right;transform:scaleX(0.8502);transform-origin:100% 0;">68,842.4790</div><div class="t" style="top:456.81px;font:13.6px/13.6px 'Liberation Serif',serif;color:#000;right:1136.00px;text-align:right;transform:scaleX(0.8501);transform-origin:100% 0;">1,171,728</div><div class="t" style="top:456.81px;font:13.6px/13.6px 'Liberation Serif',serif;color:#000;right:1057.00px;text-align:right;transform:scaleX(0.8551);transform-origin:100% 0;">80,664,660,234</div><svg class="r" style="left:51px;top:454px;" width="6" height="6" viewBox="0 0 6 6"><path d="M0 0 L6 0 L0 6 Z" fill="#008000"/></svg><svg class="r" style="left:98px;top:454px;" width="6" height="6" viewBox="0 0 6 6"><path d="M0 0 L6 0 L0 6 Z" fill="#008000"/></svg><svg class="r" style="left:289px;top:454px;" width="6" height="6" viewBox="0 0 6 6"><path d="M0 0 L6 0 L0 6 Z" fill="#008000"/></svg><svg class="r" style="left:333px;top:454px;" width="6" height="6" viewBox="0 0 6 6"><path d="M0 0 L6 0 L0 6 Z" fill="#008000"/></svg><svg class="r" style="left:399px;top:454px;" width="6" height="6" viewBox="0 0 6 6"><path d="M0 0 L6 0 L0 6 Z" fill="#008000"/></svg><svg class="r" style="left:466px;top:454px;" width="6" height="6" viewBox="0 0 6 6"><path d="M0 0 L6 0 L0 6 Z" fill="#008000"/></svg><div class="t" style="top:472.81px;font:13.6px/13.6px 'Liberation Serif',serif;color:#000;left:16.00px;width:40px;text-align:center;transform:scaleX(0.9563);transform-origin:50% 0;">9</div><div class="t" style="top:472.81px;font:13.6px/13.6px 'Liberation Serif',serif;color:#000;left:52px;transform:scaleX(0.8829);transform-origin:0 0;">M1034</div><div class="t" style="top:472.81px;font:13.6px/13.6px 'Liberation Serif',serif;color:#000;left:100px;transform:scaleX(0.9059);transform-origin:0 0;">Máy đào &lt;=3,6m3</div><div class="t" style="top:472.81px;font:13.6px/13.6px 'Liberation Serif',serif;color:#000;left:290.50px;width:40px;text-align:center;transform:scaleX(0.9311);transform-origin:50% 0;">ca</div><div class="t" style="top:472.81px;font:13.6px/13.6px 'Liberation Serif',serif;color:#000;right:1204.00px;text-align:right;transform:scaleX(0.8502);transform-origin:100% 0;">37,224.1680</div><div class="t" style="top:472.81px;font:13.6px/13.6px 'Liberation Serif',serif;color:#000;right:1136.00px;text-align:right;transform:scaleX(0.8501);transform-origin:100% 0;">3,914,857</div><div class="t" style="top:472.81px;font:13.6px/13.6px 'Liberation Serif',serif;color:#000;right:1058.00px;text-align:right;transform:scaleX(0.9764);transform-origin:100% 0;">###########</div><svg class="r" style="left:51px;top:471px;" width="6" height="6" viewBox="0 0 6 6"><path d="M0 0 L6 0 L0 6 Z" fill="#008000"/></svg><svg class="r" style="left:98px;top:471px;" width="6" height="6" viewBox="0 0 6 6"><path d="M0 0 L6 0 L0 6 Z" fill="#008000"/></svg><svg class="r" style="left:289px;top:471px;" width="6" height="6" viewBox="0 0 6 6"><path d="M0 0 L6 0 L0 6 Z" fill="#008000"/></svg><svg class="r" style="left:333px;top:471px;" width="6" height="6" viewBox="0 0 6 6"><path d="M0 0 L6 0 L0 6 Z" fill="#008000"/></svg><svg class="r" style="left:399px;top:471px;" width="6" height="6" viewBox="0 0 6 6"><path d="M0 0 L6 0 L0 6 Z" fill="#008000"/></svg><svg class="r" style="left:466px;top:471px;" width="6" height="6" viewBox="0 0 6 6"><path d="M0 0 L6 0 L0 6 Z" fill="#008000"/></svg><div class="t" style="top:489.81px;font:13.6px/13.6px 'Liberation Serif',serif;color:#000;left:16.00px;width:40px;text-align:center;transform:scaleX(0.8901);transform-origin:50% 0;">10</div><div class="t" style="top:489.81px;font:13.6px/13.6px 'Liberation Serif',serif;color:#000;left:52px;transform:scaleX(0.8829);transform-origin:0 0;">M1216</div><div class="t" style="top:489.81px;font:13.6px/13.6px 'Liberation Serif',serif;color:#000;left:100px;transform:scaleX(0.9098);transform-origin:0 0;">Máy đầm 9T</div><div class="t" style="top:489.81px;font:13.6px/13.6px 'Liberation Serif',serif;color:#000;left:290.50px;width:40px;text-align:center;transform:scaleX(0.9311);transform-origin:50% 0;">ca</div><div class="t" style="top:489.81px;font:13.6px/13.6px 'Liberation Serif',serif;color:#000;right:1204.00px;text-align:right;transform:scaleX(0.8502);transform-origin:100% 0;">26,577.5040</div><div class="t" style="top:489.81px;font:13.6px/13.6px 'Liberation Serif',serif;color:#000;right:1136.00px;text-align:right;transform:scaleX(0.8584);transform-origin:100% 0;">562,922</div><div class="t" style="top:489.81px;font:13.6px/13.6px 'Liberation Serif',serif;color:#000;right:1057.00px;text-align:right;transform:scaleX(0.8551);transform-origin:100% 0;">14,961,061,707</div><svg class="r" style="left:51px;top:487px;" width="6" height="6" viewBox="0 0 6 6"><path d="M0 0 L6 0 L0 6 Z" fill="#008000"/></svg><svg class="r" style="left:98px;top:487px;" width="6" height="6" viewBox="0 0 6 6"><path d="M0 0 L6 0 L0 6 Z" fill="#008000"/></svg><svg class="r" style="left:289px;top:487px;" width="6" height="6" viewBox="0 0 6 6"><path d="M0 0 L6 0 L0 6 Z" fill="#008000"/></svg><svg class="r" style="left:333px;top:487px;" width="6" height="6" viewBox="0 0 6 6"><path d="M0 0 L6 0 L0 6 Z" fill="#008000"/></svg><svg class="r" style="left:399px;top:487px;" width="6" height="6" viewBox="0 0 6 6"><path d="M0 0 L6 0 L0 6 Z" fill="#008000"/></svg><svg class="r" style="left:466px;top:487px;" width="6" height="6" viewBox="0 0 6 6"><path d="M0 0 L6 0 L0 6 Z" fill="#008000"/></svg><div class="t" style="top:506.81px;font:13.6px/13.6px 'Liberation Serif',serif;color:#000;left:16.00px;width:40px;text-align:center;transform:scaleX(0.8871);transform-origin:50% 0;">11</div><div class="t" style="top:506.81px;font:13.6px/13.6px 'Liberation Serif',serif;color:#000;left:52px;transform:scaleX(0.8829);transform-origin:0 0;">M1672</div><div class="t" style="top:506.81px;font:13.6px/13.6px 'Liberation Serif',serif;color:#000;left:100px;transform:scaleX(0.9042);transform-origin:0 0;">Máy bơm nước 200m3/h (14kW)</div><div class="t" style="top:506.81px;font:13.6px/13.6px 'Liberation Serif',serif;color:#000;left:290.50px;width:40px;text-align:center;transform:scaleX(0.9311);transform-origin:50% 0;">ca</div><div class="t" style="top:506.81px;font:13.6px/13.6px 'Liberation Serif',serif;color:#000;right:1204.00px;text-align:right;transform:scaleX(0.8502);transform-origin:100% 0;">94,805.3000</div><div class="t" style="top:506.81px;font:13.6px/13.6px 'Liberation Serif',serif;color:#000;right:1136.00px;text-align:right;transform:scaleX(0.8584);transform-origin:100% 0;">725,561</div><div class="t" style="top:506.81px;font:13.6px/13.6px 'Liberation Serif',serif;color:#000;right:1057.00px;text-align:right;transform:scaleX(0.8551);transform-origin:100% 0;">68,787,028,273</div><svg class="r" style="left:51px;top:504px;" width="6" height="6" viewBox="0 0 6 6"><path d="M0 0 L6 0 L0 6 Z" fill="#008000"/></svg><svg class="r" style="left:98px;top:504px;" width="6" height="6" viewBox="0 0 6 6"><path d="M0 0 L6 0 L0 6 Z" fill="#008000"/></svg><svg class="r" style="left:289px;top:504px;" width="6" height="6" viewBox="0 0 6 6"><path d="M0 0 L6 0 L0 6 Z" fill="#008000"/></svg><svg class="r" style="left:333px;top:504px;" width="6" height="6" viewBox="0 0 6 6"><path d="M0 0 L6 0 L0 6 Z" fill="#008000"/></svg><svg class="r" style="left:399px;top:504px;" width="6" height="6" viewBox="0 0 6 6"><path d="M0 0 L6 0 L0 6 Z" fill="#008000"/></svg><svg class="r" style="left:466px;top:504px;" width="6" height="6" viewBox="0 0 6 6"><path d="M0 0 L6 0 L0 6 Z" fill="#008000"/></svg><div class="t" style="top:522.81px;font:13.6px/13.6px 'Liberation Serif',serif;color:#000;left:16.00px;width:40px;text-align:center;transform:scaleX(0.8901);transform-origin:50% 0;">12</div><div class="t" style="top:522.81px;font:13.6px/13.6px 'Liberation Serif',serif;color:#000;left:52px;transform:scaleX(0.8829);transform-origin:0 0;">M1682</div><div class="t" style="top:522.81px;font:13.6px/13.6px 'Liberation Serif',serif;color:#000;left:100px;transform:scaleX(0.9084);transform-origin:0 0;">Máy bơm nước 2kW</div><div class="t" style="top:522.81px;font:13.6px/13.6px 'Liberation Serif',serif;color:#000;left:290.50px;width:40px;text-align:center;transform:scaleX(0.9311);transform-origin:50% 0;">ca</div><div class="t" style="top:522.81px;font:13.6px/13.6px 'Liberation Serif',serif;color:#000;right:1204.00px;text-align:right;transform:scaleX(0.8584);transform-origin:100% 0;">68.9020</div><div class="t" style="top:522.81px;font:13.6px/13.6px 'Liberation Serif',serif;color:#000;right:1136.00px;text-align:right;transform:scaleX(0.8598);transform-origin:100% 0;">46,703</div><div class="t" style="top:522.81px;font:13.6px/13.6px 'Liberation Serif',serif;color:#000;right:1057.00px;text-align:right;transform:scaleX(0.8590);transform-origin:100% 0;">3,217,930</div><svg class="r" style="left:51px;top:521px;" width="6" height="6" viewBox="0 0 6 6"><path d="M0 0 L6 0 L0 6 Z" fill="#008000"/></svg><svg class="r" style="left:98px;top:521px;" width="6" height="6" viewBox="0 0 6 6"><path d="M0 0 L6 0 L0 6 Z" fill="#008000"/></svg><svg class="r" style="left:289px;top:521px;" width="6" height="6" viewBox="0 0 6 6"><path d="M0 0 L6 0 L0 6 Z" fill="#008000"/></svg><svg class="r" style="left:333px;top:521px;" width="6" height="6" viewBox="0 0 6 6"><path d="M0 0 L6 0 L0 6 Z" fill="#008000"/></svg><svg class="r" style="left:399px;top:521px;" width="6" height="6" viewBox="0 0 6 6"><path d="M0 0 L6 0 L0 6 Z" fill="#008000"/></svg><svg class="r" style="left:466px;top:521px;" width="6" height="6" viewBox="0 0 6 6"><path d="M0 0 L6 0 L0 6 Z" fill="#008000"/></svg><div class="t" style="top:539.81px;font:13.6px/13.6px 'Liberation Serif',serif;color:#000;left:16.00px;width:40px;text-align:center;transform:scaleX(0.8901);transform-origin:50% 0;">13</div><div class="t" style="top:539.81px;font:13.6px/13.6px 'Liberation Serif',serif;color:#000;left:52px;transform:scaleX(0.8829);transform-origin:0 0;">M1908</div><div class="t" style="top:539.81px;font:13.6px/13.6px 'Liberation Serif',serif;color:#000;left:100px;transform:scaleX(0.8986);transform-origin:0 0;">Máy cắt uốn cốt thép 5kW</div><div class="t" style="top:539.81px;font:13.6px/13.6px 'Liberation Serif',serif;color:#000;left:290.50px;width:40px;text-align:center;transform:scaleX(0.9311);transform-origin:50% 0;">ca</div><div class="t" style="top:539.81px;font:13.6px/13.6px 'Liberation Serif',serif;color:#000;right:1204.00px;text-align:right;transform:scaleX(0.8502);transform-origin:100% 0;">67,258.4000</div><div class="t" style="top:539.81px;font:13.6px/13.6px 'Liberation Serif',serif;color:#000;right:1136.00px;text-align:right;transform:scaleX(0.8598);transform-origin:100% 0;">54,954</div><div class="t" style="top:539.81px;font:13.6px/13.6px 'Liberation Serif',serif;color:#000;right:1057.00px;text-align:right;transform:scaleX(0.8533);transform-origin:100% 0;">3,696,118,114</div><svg class="r" style="left:51px;top:537px;" width="6" height="6" viewBox="0 0 6 6"><path d="M0 0 L6 0 L0 6 Z" fill="#008000"/></svg><svg class="r" style="left:98px;top:537px;" width="6" height="6" viewBox="0 0 6 6"><path d="M0 0 L6 0 L0 6 Z" fill="#008000"/></svg><svg class="r" style="left:289px;top:537px;" width="6" height="6" viewBox="0 0 6 6"><path d="M0 0 L6 0 L0 6 Z" fill="#008000"/></svg><svg class="r" style="left:333px;top:537px;" width="6" height="6" viewBox="0 0 6 6"><path d="M0 0 L6 0 L0 6 Z" fill="#008000"/></svg><svg class="r" style="left:399px;top:537px;" width="6" height="6" viewBox="0 0 6 6"><path d="M0 0 L6 0 L0 6 Z" fill="#008000"/></svg><svg class="r" style="left:466px;top:537px;" width="6" height="6" viewBox="0 0 6 6"><path d="M0 0 L6 0 L0 6 Z" fill="#008000"/></svg><div class="t" style="top:556.81px;font:13.6px/13.6px 'Liberation Serif',serif;color:#000;left:16.00px;width:40px;text-align:center;transform:scaleX(0.8901);transform-origin:50% 0;">14</div><div class="t" style="top:556.81px;font:13.6px/13.6px 'Liberation Serif',serif;color:#000;left:52px;transform:scaleX(0.8829);transform-origin:0 0;">M1972</div><div class="t" style="top:556.81px;font:13.6px/13.6px 'Liberation Serif',serif;color:#000;left:100px;transform:scaleX(0.9056);transform-origin:0 0;">Máy cuốn ống</div><div class="t" style="top:556.81px;font:13.6px/13.6px 'Liberation Serif',serif;color:#000;left:290.50px;width:40px;text-align:center;transform:scaleX(0.9311);transform-origin:50% 0;">ca</div><div class="t" style="top:556.81px;font:13.6px/13.6px 'Liberation Serif',serif;color:#000;right:1204.00px;text-align:right;transform:scaleX(0.9825);transform-origin:100% 0;">#########</div><div class="t" style="top:556.81px;font:13.6px/13.6px 'Liberation Serif',serif;color:#000;right:1136.00px;text-align:right;transform:scaleX(0.8598);transform-origin:100% 0;">58,030</div><div class="t" style="top:556.81px;font:13.6px/13.6px 'Liberation Serif',serif;color:#000;right:1057.00px;text-align:right;transform:scaleX(0.8544);transform-origin:100% 0;">11,594,655,135</div><svg class="r" style="left:51px;top:554px;" width="6" height="6" viewBox="0 0 6 6"><path d="M0 0 L6 0 L0 6 Z" fill="#008000"/></svg><svg class="r" style="left:98px;top:554px;" width="6" height="6" viewBox="0 0 6 6"><path d="M0 0 L6 0 L0 6 Z" fill="#008000"/></svg><svg class="r" style="left:289px;top:554px;" width="6" height="6" viewBox="0 0 6 6"><path d="M0 0 L6 0 L0 6 Z" fill="#008000"/></svg><svg class="r" style="left:333px;top:554px;" width="6" height="6" viewBox="0 0 6 6"><path d="M0 0 L6 0 L0 6 Z" fill="#008000"/></svg><svg class="r" style="left:399px;top:554px;" width="6" height="6" viewBox="0 0 6 6"><path d="M0 0 L6 0 L0 6 Z" fill="#008000"/></svg><svg class="r" style="left:466px;top:554px;" width="6" height="6" viewBox="0 0 6 6"><path d="M0 0 L6 0 L0 6 Z" fill="#008000"/></svg><div class="t" style="top:572.81px;font:13.6px/13.6px 'Liberation Serif',serif;color:#000;left:16.00px;width:40px;text-align:center;transform:scaleX(0.8901);transform-origin:50% 0;">15</div><div class="t" style="top:572.81px;font:13.6px/13.6px 'Liberation Serif',serif;color:#000;left:52px;transform:scaleX(0.8829);transform-origin:0 0;">M2046</div><div class="t" style="top:572.81px;font:13.6px/13.6px 'Liberation Serif',serif;color:#000;left:100px;transform:scaleX(0.8995);transform-origin:0 0;">Máy ép thủy lực 130T</div><div class="t" style="top:572.81px;font:13.6px/13.6px 'Liberation Serif',serif;color:#000;left:290.50px;width:40px;text-align:center;transform:scaleX(0.9311);transform-origin:50% 0;">ca</div><div class="t" style="top:572.81px;font:13.6px/13.6px 'Liberation Serif',serif;color:#000;right:1136.00px;text-align:right;transform:scaleX(0.8584);transform-origin:100% 0;">522,678</div><svg class="r" style="left:51px;top:571px;" width="6" height="6" viewBox="0 0 6 6"><path d="M0 0 L6 0 L0 6 Z" fill="#008000"/></svg><svg class="r" style="left:98px;top:571px;" width="6" height="6" viewBox="0 0 6 6"><path d="M0 0 L6 0 L0 6 Z" fill="#008000"/></svg><svg class="r" style="left:289px;top:571px;" width="6" height="6" viewBox="0 0 6 6"><path d="M0 0 L6 0 L0 6 Z" fill="#008000"/></svg><svg class="r" style="left:333px;top:571px;" width="6" height="6" viewBox="0 0 6 6"><path d="M0 0 L6 0 L0 6 Z" fill="#008000"/></svg><svg class="r" style="left:399px;top:571px;" width="6" height="6" viewBox="0 0 6 6"><path d="M0 0 L6 0 L0 6 Z" fill="#008000"/></svg><svg class="r" style="left:466px;top:571px;" width="6" height="6" viewBox="0 0 6 6"><path d="M0 0 L6 0 L0 6 Z" fill="#008000"/></svg><div class="t" style="top:589.81px;font:13.6px/13.6px 'Liberation Serif',serif;color:#000;left:16.00px;width:40px;text-align:center;transform:scaleX(0.8901);transform-origin:50% 0;">16</div><div class="t" style="top:589.81px;font:13.6px/13.6px 'Liberation Serif',serif;color:#000;left:52px;transform:scaleX(0.8829);transform-origin:0 0;">M2094</div><div class="t" style="top:589.81px;font:13.6px/13.6px 'Liberation Serif',serif;color:#000;left:100px;transform:scaleX(0.9069);transform-origin:0 0;">Máy hàn 2,3kW</div><div class="t" style="top:589.81px;font:13.6px/13.6px 'Liberation Serif',serif;color:#000;left:290.50px;width:40px;text-align:center;transform:scaleX(0.9311);transform-origin:50% 0;">ca</div><div class="t" style="top:589.81px;font:13.6px/13.6px 'Liberation Serif',serif;color:#000;right:1204.00px;text-align:right;transform:scaleX(0.9825);transform-origin:100% 0;">#########</div><div class="t" style="top:589.81px;font:13.6px/13.6px 'Liberation Serif',serif;color:#000;right:1136.00px;text-align:right;transform:scaleX(0.8584);transform-origin:100% 0;">104,624</div><div class="t" style="top:589.81px;font:13.6px/13.6px 'Liberation Serif',serif;color:#000;right:1058.00px;text-align:right;transform:scaleX(0.9764);transform-origin:100% 0;">###########</div><svg class="r" style="left:51px;top:587px;" width="6" height="6" viewBox="0 0 6 6"><path d="M0 0 L6 0 L0 6 Z" fill="#008000"/></svg><svg class="r" style="left:98px;top:587px;" width="6" height="6" viewBox="0 0 6 6"><path d="M0 0 L6 0 L0 6 Z" fill="#008000"/></svg><svg class="r" style="left:289px;top:587px;" width="6" height="6" viewBox="0 0 6 6"><path d="M0 0 L6 0 L0 6 Z" fill="#008000"/></svg><svg class="r" style="left:333px;top:587px;" width="6" height="6" viewBox="0 0 6 6"><path d="M0 0 L6 0 L0 6 Z" fill="#008000"/></svg><svg class="r" style="left:399px;top:587px;" width="6" height="6" viewBox="0 0 6 6"><path d="M0 0 L6 0 L0 6 Z" fill="#008000"/></svg><svg class="r" style="left:466px;top:587px;" width="6" height="6" viewBox="0 0 6 6"><path d="M0 0 L6 0 L0 6 Z" fill="#008000"/></svg><div class="t" style="top:606.81px;font:13.6px/13.6px 'Liberation Serif',serif;color:#000;left:16.00px;width:40px;text-align:center;transform:scaleX(0.8901);transform-origin:50% 0;">17</div><div class="t" style="top:606.81px;font:13.6px/13.6px 'Liberation Serif',serif;color:#000;left:52px;transform:scaleX(0.8829);transform-origin:0 0;">M2324</div><div class="t" style="top:606.81px;font:13.6px/13.6px 'Liberation Serif',serif;color:#000;left:100px;transform:scaleX(0.9033);transform-origin:0 0;">Máy khoan đập cáp 40kW</div><div class="t" style="top:606.81px;font:13.6px/13.6px 'Liberation Serif',serif;color:#000;left:290.50px;width:40px;text-align:center;transform:scaleX(0.9311);transform-origin:50% 0;">ca</div><div class="t" style="top:606.81px;font:13.6px/13.6px 'Liberation Serif',serif;color:#000;right:1204.00px;text-align:right;transform:scaleX(0.8573);transform-origin:100% 0;">230.1620</div><div class="t" style="top:606.81px;font:13.6px/13.6px 'Liberation Serif',serif;color:#000;right:1136.00px;text-align:right;transform:scaleX(0.8584);transform-origin:100% 0;">510,432</div><div class="t" style="top:606.81px;font:13.6px/13.6px 'Liberation Serif',serif;color:#000;right:1057.00px;text-align:right;transform:scaleX(0.8582);transform-origin:100% 0;">117,482,050</div><svg class="r" style="left:51px;top:604px;" width="6" height="6" viewBox="0 0 6 6"><path d="M0 0 L6 0 L0 6 Z" fill="#008000"/></svg><svg class="r" style="left:98px;top:604px;" width="6" height="6" viewBox="0 0 6 6"><path d="M0 0 L6 0 L0 6 Z" fill="#008000"/></svg><svg class="r" style="left:289px;top:604px;" width="6" height="6" viewBox="0 0 6 6"><path d="M0 0 L6 0 L0 6 Z" fill="#008000"/></svg><svg class="r" style="left:333px;top:604px;" width="6" height="6" viewBox="0 0 6 6"><path d="M0 0 L6 0 L0 6 Z" fill="#008000"/></svg><svg class="r" style="left:399px;top:604px;" width="6" height="6" viewBox="0 0 6 6"><path d="M0 0 L6 0 L0 6 Z" fill="#008000"/></svg><svg class="r" style="left:466px;top:604px;" width="6" height="6" viewBox="0 0 6 6"><path d="M0 0 L6 0 L0 6 Z" fill="#008000"/></svg><div class="t" style="top:622.81px;font:13.6px/13.6px 'Liberation Serif',serif;color:#000;left:16.00px;width:40px;text-align:center;transform:scaleX(0.8901);transform-origin:50% 0;">18</div><div class="t" style="top:622.81px;font:13.6px/13.6px 'Liberation Serif',serif;color:#000;left:52px;transform:scaleX(0.8829);transform-origin:0 0;">M2500</div><div class="t" style="top:622.81px;font:13.6px/13.6px 'Liberation Serif',serif;color:#000;left:100px;transform:scaleX(0.9068);transform-origin:0 0;">Máy khoan TRC-15</div><div class="t" style="top:622.81px;font:13.6px/13.6px 'Liberation Serif',serif;color:#000;left:290.50px;width:40px;text-align:center;transform:scaleX(0.9311);transform-origin:50% 0;">ca</div><div class="t" style="top:622.81px;font:13.6px/13.6px 'Liberation Serif',serif;color:#000;right:1136.00px;text-align:right;transform:scaleX(0.8492);transform-origin:100% 0;">11,837,741</div><svg class="r" style="left:51px;top:621px;" width="6" height="6" viewBox="0 0 6 6"><path d="M0 0 L6 0 L0 6 Z" fill="#008000"/></svg><svg class="r" style="left:98px;top:621px;" width="6" height="6" viewBox="0 0 6 6"><path d="M0 0 L6 0 L0 6 Z" fill="#008000"/></svg><svg class="r" style="left:289px;top:621px;" width="6" height="6" viewBox="0 0 6 6"><path d="M0 0 L6 0 L0 6 Z" fill="#008000"/></svg><svg class="r" style="left:333px;top:621px;" width="6" height="6" viewBox="0 0 6 6"><path d="M0 0 L6 0 L0 6 Z" fill="#008000"/></svg><svg class="r" style="left:399px;top:621px;" width="6" height="6" viewBox="0 0 6 6"><path d="M0 0 L6 0 L0 6 Z" fill="#008000"/></svg><svg class="r" style="left:466px;top:621px;" width="6" height="6" viewBox="0 0 6 6"><path d="M0 0 L6 0 L0 6 Z" fill="#008000"/></svg><div class="t" style="top:639.81px;font:13.6px/13.6px 'Liberation Serif',serif;color:#000;left:16.00px;width:40px;text-align:center;transform:scaleX(0.8901);transform-origin:50% 0;">19</div><div class="t" style="top:639.81px;font:13.6px/13.6px 'Liberation Serif',serif;color:#000;left:52px;transform:scaleX(0.8829);transform-origin:0 0;">M2708</div><div class="t" style="top:639.81px;font:13.6px/13.6px 'Liberation Serif',serif;color:#000;left:100px;transform:scaleX(0.9021);transform-origin:0 0;">Máy nén khí 360m3/h</div><div class="t" style="top:639.81px;font:13.6px/13.6px 'Liberation Serif',serif;color:#000;left:290.50px;width:40px;text-align:center;transform:scaleX(0.9311);transform-origin:50% 0;">ca</div><div class="t" style="top:639.81px;font:13.6px/13.6px 'Liberation Serif',serif;color:#000;right:1204.00px;text-align:right;transform:scaleX(0.8502);transform-origin:100% 0;">67,552.7400</div><div class="t" style="top:639.81px;font:13.6px/13.6px 'Liberation Serif',serif;color:#000;right:1136.00px;text-align:right;transform:scaleX(0.8584);transform-origin:100% 0;">441,247</div><div class="t" style="top:639.81px;font:13.6px/13.6px 'Liberation Serif',serif;color:#000;right:1057.00px;text-align:right;transform:scaleX(0.8551);transform-origin:100% 0;">29,807,443,867</div><svg class="r" style="left:51px;top:637px;" width="6" height="6" viewBox="0 0 6 6"><path d="M0 0 L6 0 L0 6 Z" fill="#008000"/></svg><svg class="r" style="left:98px;top:637px;" width="6" height="6" viewBox="0 0 6 6"><path d="M0 0 L6 0 L0 6 Z" fill="#008000"/></svg><svg class="r" style="left:289px;top:637px;" width="6" height="6" viewBox="0 0 6 6"><path d="M0 0 L6 0 L0 6 Z" fill="#008000"/></svg><svg class="r" style="left:333px;top:637px;" width="6" height="6" viewBox="0 0 6 6"><path d="M0 0 L6 0 L0 6 Z" fill="#008000"/></svg><svg class="r" style="left:399px;top:637px;" width="6" height="6" viewBox="0 0 6 6"><path d="M0 0 L6 0 L0 6 Z" fill="#008000"/></svg><svg class="r" style="left:466px;top:637px;" width="6" height="6" viewBox="0 0 6 6"><path d="M0 0 L6 0 L0 6 Z" fill="#008000"/></svg><div class="t" style="top:656.81px;font:13.6px/13.6px 'Liberation Serif',serif;color:#000;left:16.00px;width:40px;text-align:center;transform:scaleX(0.8901);transform-origin:50% 0;">20</div><div class="t" style="top:656.81px;font:13.6px/13.6px 'Liberation Serif',serif;color:#000;left:52px;transform:scaleX(0.8829);transform-origin:0 0;">M2836</div><div class="t" style="top:656.81px;font:13.6px/13.6px 'Liberation Serif',serif;color:#000;left:100px;transform:scaleX(0.9074);transform-origin:0 0;">Máy ủi &lt;=110CV</div><div class="t" style="top:656.81px;font:13.6px/13.6px 'Liberation Serif',serif;color:#000;left:290.50px;width:40px;text-align:center;transform:scaleX(0.9311);transform-origin:50% 0;">ca</div><div class="t" style="top:656.81px;font:13.6px/13.6px 'Liberation Serif',serif;color:#000;right:1204.00px;text-align:right;transform:scaleX(0.8502);transform-origin:100% 0;">33,172.7040</div><div class="t" style="top:656.81px;font:13.6px/13.6px 'Liberation Serif',serif;color:#000;right:1136.00px;text-align:right;transform:scaleX(0.8584);transform-origin:100% 0;">937,087</div><div class="t" style="top:656.81px;font:13.6px/13.6px 'Liberation Serif',serif;color:#000;right:1057.00px;text-align:right;transform:scaleX(0.8551);transform-origin:100% 0;">31,085,709,673</div><svg class="r" style="left:51px;top:654px;" width="6" height="6" viewBox="0 0 6 6"><path d="M0 0 L6 0 L0 6 Z" fill="#008000"/></svg><svg class="r" style="left:98px;top:654px;" width="6" height="6" viewBox="0 0 6 6"><path d="M0 0 L6 0 L0 6 Z" fill="#008000"/></svg><svg class="r" style="left:289px;top:654px;" width="6" height="6" viewBox="0 0 6 6"><path d="M0 0 L6 0 L0 6 Z" fill="#008000"/></svg><svg class="r" style="left:333px;top:654px;" width="6" height="6" viewBox="0 0 6 6"><path d="M0 0 L6 0 L0 6 Z" fill="#008000"/></svg><svg class="r" style="left:399px;top:654px;" width="6" height="6" viewBox="0 0 6 6"><path d="M0 0 L6 0 L0 6 Z" fill="#008000"/></svg><svg class="r" style="left:466px;top:654px;" width="6" height="6" viewBox="0 0 6 6"><path d="M0 0 L6 0 L0 6 Z" fill="#008000"/></svg><div class="t" style="top:672.81px;font:13.6px/13.6px 'Liberation Serif',serif;color:#000;left:16.00px;width:40px;text-align:center;transform:scaleX(0.8901);transform-origin:50% 0;">21</div><div class="t" style="top:672.81px;font:13.6px/13.6px 'Liberation Serif',serif;color:#000;left:52px;transform:scaleX(0.8829);transform-origin:0 0;">M3050</div><div class="t" style="top:672.81px;font:13.6px/13.6px 'Liberation Serif',serif;color:#000;left:100px;transform:scaleX(0.9030);transform-origin:0 0;">Máy sàng rung</div><div class="t" style="top:672.81px;font:13.6px/13.6px 'Liberation Serif',serif;color:#000;left:290.50px;width:40px;text-align:center;transform:scaleX(0.9311);transform-origin:50% 0;">ca</div><div class="t" style="top:672.81px;font:13.6px/13.6px 'Liberation Serif',serif;color:#000;right:1204.00px;text-align:right;transform:scaleX(0.8502);transform-origin:100% 0;">94,805.3000</div><div class="t" style="top:672.81px;font:13.6px/13.6px 'Liberation Serif',serif;color:#000;right:1136.00px;text-align:right;transform:scaleX(0.8584);transform-origin:100% 0;">294,886</div><div class="t" style="top:672.81px;font:13.6px/13.6px 'Liberation Serif',serif;color:#000;right:1057.00px;text-align:right;transform:scaleX(0.8551);transform-origin:100% 0;">27,956,755,696</div><svg class="r" style="left:51px;top:671px;" width="6" height="6" viewBox="0 0 6 6"><path d="M0 0 L6 0 L0 6 Z" fill="#008000"/></svg><svg class="r" style="left:98px;top:671px;" width="6" height="6" viewBox="0 0 6 6"><path d="M0 0 L6 0 L0 6 Z" fill="#008000"/></svg><svg class="r" style="left:289px;top:671px;" width="6" height="6" viewBox="0 0 6 6"><path d="M0 0 L6 0 L0 6 Z" fill="#008000"/></svg><svg class="r" style="left:333px;top:671px;" width="6" height="6" viewBox="0 0 6 6"><path d="M0 0 L6 0 L0 6 Z" fill="#008000"/></svg><svg class="r" style="left:399px;top:671px;" width="6" height="6" viewBox="0 0 6 6"><path d="M0 0 L6 0 L0 6 Z" fill="#008000"/></svg><svg class="r" style="left:466px;top:671px;" width="6" height="6" viewBox="0 0 6 6"><path d="M0 0 L6 0 L0 6 Z" fill="#008000"/></svg><div class="t" style="top:689.81px;font:13.6px/13.6px 'Liberation Serif',serif;color:#000;left:16.00px;width:40px;text-align:center;transform:scaleX(0.8901);transform-origin:50% 0;">22</div><div class="t" style="top:689.81px;font:13.6px/13.6px 'Liberation Serif',serif;color:#000;left:52px;transform:scaleX(0.8829);transform-origin:0 0;">M3184</div><div class="t" style="top:689.81px;font:13.6px/13.6px 'Liberation Serif',serif;color:#000;left:100px;transform:scaleX(0.8990);transform-origin:0 0;">Máy trộn dung dịch</div><div class="t" style="top:689.81px;font:13.6px/13.6px 'Liberation Serif',serif;color:#000;left:290.50px;width:40px;text-align:center;transform:scaleX(0.9311);transform-origin:50% 0;">ca</div><div class="t" style="top:689.81px;font:13.6px/13.6px 'Liberation Serif',serif;color:#000;right:1204.00px;text-align:right;transform:scaleX(0.8502);transform-origin:100% 0;">94,805.3000</div><div class="t" style="top:689.81px;font:13.6px/13.6px 'Liberation Serif',serif;color:#000;right:1136.00px;text-align:right;transform:scaleX(0.8598);transform-origin:100% 0;">64,541</div><div class="t" style="top:689.81px;font:13.6px/13.6px 'Liberation Serif',serif;color:#000;right:1057.00px;text-align:right;transform:scaleX(0.8540);transform-origin:100% 0;">6,118,828,867</div><svg class="r" style="left:51px;top:687px;" width="6" height="6" viewBox="0 0 6 6"><path d="M0 0 L6 0 L0 6 Z" fill="#008000"/></svg><svg class="r" style="left:98px;top:687px;" width="6" height="6" viewBox="0 0 6 6"><path d="M0 0 L6 0 L0 6 Z" fill="#008000"/></svg><svg class="r" style="left:289px;top:687px;" width="6" height="6" viewBox="0 0 6 6"><path d="M0 0 L6 0 L0 6 Z" fill="#008000"/></svg><svg class="r" style="left:333px;top:687px;" width="6" height="6" viewBox="0 0 6 6"><path d="M0 0 L6 0 L0 6 Z" fill="#008000"/></svg><svg class="r" style="left:399px;top:687px;" width="6" height="6" viewBox="0 0 6 6"><path d="M0 0 L6 0 L0 6 Z" fill="#008000"/></svg><svg class="r" style="left:466px;top:687px;" width="6" height="6" viewBox="0 0 6 6"><path d="M0 0 L6 0 L0 6 Z" fill="#008000"/></svg><div class="t" style="top:706.81px;font:13.6px/13.6px 'Liberation Serif',serif;color:#000;left:16.00px;width:40px;text-align:center;transform:scaleX(0.8901);transform-origin:50% 0;">23</div><div class="t" style="top:706.81px;font:13.6px/13.6px 'Liberation Serif',serif;color:#000;left:52px;transform:scaleX(0.8829);transform-origin:0 0;">M3190</div><div class="t" style="top:706.81px;font:13.6px/13.6px 'Liberation Serif',serif;color:#000;left:100px;transform:scaleX(0.8973);transform-origin:0 0;">Máy trộn dung dịch 750l</div><div class="t" style="top:706.81px;font:13.6px/13.6px 'Liberation Serif',serif;color:#000;left:290.50px;width:40px;text-align:center;transform:scaleX(0.9311);transform-origin:50% 0;">ca</div><div class="t" style="top:706.81px;font:13.6px/13.6px 'Liberation Serif',serif;color:#000;right:1204.00px;text-align:right;transform:scaleX(0.8573);transform-origin:100% 0;">137.8040</div><div class="t" style="top:706.81px;font:13.6px/13.6px 'Liberation Serif',serif;color:#000;right:1136.00px;text-align:right;transform:scaleX(0.8598);transform-origin:100% 0;">64,541</div><div class="t" style="top:706.81px;font:13.6px/13.6px 'Liberation Serif',serif;color:#000;right:1057.00px;text-align:right;transform:scaleX(0.8590);transform-origin:100% 0;">8,894,008</div><svg class="r" style="left:51px;top:704px;" width="6" height="6" viewBox="0 0 6 6"><path d="M0 0 L6 0 L0 6 Z" fill="#008000"/></svg><svg class="r" style="left:98px;top:704px;" width="6" height="6" viewBox="0 0 6 6"><path d="M0 0 L6 0 L0 6 Z" fill="#008000"/></svg><svg class="r" style="left:289px;top:704px;" width="6" height="6" viewBox="0 0 6 6"><path d="M0 0 L6 0 L0 6 Z" fill="#008000"/></svg><svg class="r" style="left:333px;top:704px;" width="6" height="6" viewBox="0 0 6 6"><path d="M0 0 L6 0 L0 6 Z" fill="#008000"/></svg><svg class="r" style="left:399px;top:704px;" width="6" height="6" viewBox="0 0 6 6"><path d="M0 0 L6 0 L0 6 Z" fill="#008000"/></svg><svg class="r" style="left:466px;top:704px;" width="6" height="6" viewBox="0 0 6 6"><path d="M0 0 L6 0 L0 6 Z" fill="#008000"/></svg><div class="t" style="top:722.81px;font:13.6px/13.6px 'Liberation Serif',serif;color:#000;left:16.00px;width:40px;text-align:center;transform:scaleX(0.8901);transform-origin:50% 0;">24</div><div class="t" style="top:722.81px;font:13.6px/13.6px 'Liberation Serif',serif;color:#000;left:52px;transform:scaleX(0.8829);transform-origin:0 0;">M3694</div><div class="t" style="top:722.81px;font:13.6px/13.6px 'Liberation Serif',serif;color:#000;left:100px;transform:scaleX(0.8942);transform-origin:0 0;">Thiết bị siêu âm</div><div class="t" style="top:722.81px;font:13.6px/13.6px 'Liberation Serif',serif;color:#000;left:290.50px;width:40px;text-align:center;transform:scaleX(0.9311);transform-origin:50% 0;">ca</div><div class="t" style="top:722.81px;font:13.6px/13.6px 'Liberation Serif',serif;color:#000;right:1204.00px;text-align:right;transform:scaleX(0.8598);transform-origin:100% 0;">8.9600</div><div class="t" style="top:722.81px;font:13.6px/13.6px 'Liberation Serif',serif;color:#000;right:1136.00px;text-align:right;transform:scaleX(0.8584);transform-origin:100% 0;">331,545</div><div class="t" style="top:722.81px;font:13.6px/13.6px 'Liberation Serif',serif;color:#000;right:1057.00px;text-align:right;transform:scaleX(0.8590);transform-origin:100% 0;">2,970,643</div><svg class="r" style="left:51px;top:721px;" width="6" height="6" viewBox="0 0 6 6"><path d="M0 0 L6 0 L0 6 Z" fill="#008000"/></svg><svg class="r" style="left:98px;top:721px;" width="6" height="6" viewBox="0 0 6 6"><path d="M0 0 L6 0 L0 6 Z" fill="#008000"/></svg><svg class="r" style="left:289px;top:721px;" width="6" height="6" viewBox="0 0 6 6"><path d="M0 0 L6 0 L0 6 Z" fill="#008000"/></svg><svg class="r" style="left:333px;top:721px;" width="6" height="6" viewBox="0 0 6 6"><path d="M0 0 L6 0 L0 6 Z" fill="#008000"/></svg><svg class="r" style="left:399px;top:721px;" width="6" height="6" viewBox="0 0 6 6"><path d="M0 0 L6 0 L0 6 Z" fill="#008000"/></svg><svg class="r" style="left:466px;top:721px;" width="6" height="6" viewBox="0 0 6 6"><path d="M0 0 L6 0 L0 6 Z" fill="#008000"/></svg><div class="t" style="top:739.81px;font:13.6px/13.6px 'Liberation Serif',serif;color:#000;left:16.00px;width:40px;text-align:center;transform:scaleX(0.8901);transform-origin:50% 0;">25</div><div class="t" style="top:739.81px;font:13.6px/13.6px 'Liberation Serif',serif;color:#000;left:52px;transform:scaleX(0.8829);transform-origin:0 0;">M3854</div><div class="t" style="top:739.81px;font:13.6px/13.6px 'Liberation Serif',serif;color:#000;left:100px;transform:scaleX(0.8989);transform-origin:0 0;">Xe bơm bê tông tự hành 50m3/h</div><div class="t" style="top:739.81px;font:13.6px/13.6px 'Liberation Serif',serif;color:#000;left:290.50px;width:40px;text-align:center;transform:scaleX(0.9311);transform-origin:50% 0;">ca</div><div class="t" style="top:739.81px;font:13.6px/13.6px 'Liberation Serif',serif;color:#000;right:1204.00px;text-align:right;transform:scaleX(0.9825);transform-origin:100% 0;">#########</div><div class="t" style="top:739.81px;font:13.6px/13.6px 'Liberation Serif',serif;color:#000;right:1136.00px;text-align:right;transform:scaleX(0.8501);transform-origin:100% 0;">2,006,645</div><div class="t" style="top:739.81px;font:13.6px/13.6px 'Liberation Serif',serif;color:#000;right:1058.00px;text-align:right;transform:scaleX(0.9764);transform-origin:100% 0;">###########</div><svg class="r" style="left:51px;top:737px;" width="6" height="6" viewBox="0 0 6 6"><path d="M0 0 L6 0 L0 6 Z" fill="#008000"/></svg><svg class="r" style="left:98px;top:737px;" width="6" height="6" viewBox="0 0 6 6"><path d="M0 0 L6 0 L0 6 Z" fill="#008000"/></svg><svg class="r" style="left:289px;top:737px;" width="6" height="6" viewBox="0 0 6 6"><path d="M0 0 L6 0 L0 6 Z" fill="#008000"/></svg><svg class="r" style="left:333px;top:737px;" width="6" height="6" viewBox="0 0 6 6"><path d="M0 0 L6 0 L0 6 Z" fill="#008000"/></svg><svg class="r" style="left:399px;top:737px;" width="6" height="6" viewBox="0 0 6 6"><path d="M0 0 L6 0 L0 6 Z" fill="#008000"/></svg><svg class="r" style="left:466px;top:737px;" width="6" height="6" viewBox="0 0 6 6"><path d="M0 0 L6 0 L0 6 Z" fill="#008000"/></svg><div class="t" style="top:756.81px;font:13.6px/13.6px 'Liberation Serif',serif;color:#000;left:16.00px;width:40px;text-align:center;transform:scaleX(0.8901);transform-origin:50% 0;">26</div><div class="t" style="top:756.81px;font:13.6px/13.6px 'Liberation Serif',serif;color:#000;left:52px;transform:scaleX(0.8897);transform-origin:0 0;">M999</div><div class="t" style="top:756.81px;font:13.6px/13.6px 'Liberation Serif',serif;color:#000;left:100px;transform:scaleX(0.9093);transform-origin:0 0;">Máy khác</div><div class="t" style="top:756.81px;font:13.6px/13.6px 'Liberation Serif',serif;color:#000;left:290.50px;width:40px;text-align:center;transform:scaleX(0.9559);transform-origin:50% 0;">%</div><div class="t" style="top:756.81px;font:13.6px/13.6px 'Liberation Serif',serif;color:#000;right:1057.00px;text-align:right;transform:scaleX(0.8551);transform-origin:100% 0;">15,915,212,885</div><svg class="r" style="left:466px;top:754px;" width="6" height="6" viewBox="0 0 6 6"><path d="M0 0 L6 0 L0 6 Z" fill="#008000"/></svg><div class="t" style="top:773.31px;font:bold 13.6px/13.6px 'Liberation Serif',serif;color:#0000FF;left:100px;transform:scaleX(0.9317);transform-origin:0 0;">Cộng Máy:</div><div class="t" style="top:774.65px;font:12px/12px 'Liberation Serif',serif;color:#0000FF;letter-spacing:-0.1px;right:1059.10px;text-align:right;">############</div><svg class="r" style="left:466px;top:771px;" width="6" height="6" viewBox="0 0 6 6"><path d="M0 0 L6 0 L0 6 Z" fill="#008000"/></svg><div class="r" style="left:397px;top:670px;width:70px;height:19px;background:transparent;border:2px solid #217346;"></div><div class="r" style="left:463px;top:685px;width:7px;height:7px;background:#fff;"></div><div class="r" style="left:464px;top:686px;width:6px;height:6px;background:#217346;"></div><div class="r" style="left:370px;top:671px;width:17px;height:17px;background:#fff;border:1px solid #d9d9d9;"></div><svg class="r" style="left:371px;top:672px;" width="15" height="15" viewBox="0 0 15 15"><path d="M7.5 1.5 L13.5 7.5 L7.5 13.5 L1.5 7.5 Z" fill="#E8B96A"/><rect x="7" y="4.5" width="1.3" height="4.5" fill="#5a4a2a"/><rect x="7" y="10" width="1.3" height="1.3" fill="#5a4a2a"/></svg><svg class="r" style="left:17px;top:0px;" width="14" height="12" viewBox="0 0 14 12"><path d="M1.5 0 V11 H12.5 V2.5 L10 0" fill="none" stroke="#fff" stroke-width="1.6"/><rect x="3.5" y="0" width="7" height="4" fill="#fff"/><rect x="3.5" y="7.5" width="7" height="4" fill="none" stroke="#fff" stroke-width="1.3"/></svg><svg class="r" style="left:41px;top:0px;" width="16" height="12" viewBox="0 0 16 12"><path d="M2 3.5 L5.5 0.5 M2 3.5 L5.5 6.5 M2 3.5 H8.5 A4 3.8 0 0 1 8.5 11 H7" fill="none" stroke="#fff" stroke-width="1.7"/></svg><svg class="r" style="left:58px;top:3px;" width="7" height="4" viewBox="0 0 7 4"><path d="M0 0 H6 L3 3.5 Z" fill="#fff"/></svg><svg class="r" style="left:71px;top:0px;" width="14" height="12" viewBox="0 0 14 12"><path d="M12 3.5 L8.5 0.5 M12 3.5 L8.5 6.5 M12 3.5 H5.5 A4 3.8 0 0 0 5.5 11 H7" fill="none" stroke="#62a07c" stroke-width="1.7"/></svg><svg class="r" style="left:87px;top:3px;" width="7" height="4" viewBox="0 0 7 4"><path d="M0 0 H6 L3 3.5 Z" fill="#4f9a6f"/></svg><svg class="r" style="left:99px;top:0px;" width="16" height="12" viewBox="0 0 16 12"><path d="M1 2.5 H4 L5.5 0.5 H10.5 L12 2.5 H14.5 V11 H1 Z" fill="#fff"/><circle cx="7.8" cy="6.5" r="2.6" fill="#217346"/><circle cx="7.8" cy="6.5" r="1.3" fill="#fff"/></svg><svg class="r" style="left:127px;top:2px;" width="7" height="8" viewBox="0 0 7 8"><path d="M0.5 0.8 H6" stroke="#fff" stroke-width="1"/><path d="M0 3 H6.5 L3.25 6.5 Z" fill="#fff"/></svg><div class="t" style="top:0.19px;font:11px/11px 'Liberation Sans',sans-serif;color:#EAF2EC;left:679px;transform:scaleX(0.9113);transform-origin:0 0;">Dự toán cọc khoan nhồi  [Compatibility Mode]  -  Excel</div><div class="r" style="left:1392px;top:0px;width:48px;height:12px;background:#FFFFFF;border-radius:0 0 1px 1px;"></div><div class="t" style="top:0.19px;font:11px/11px 'Liberation Sans',sans-serif;color:#217346;left:1400px;transform:scaleX(0.9211);transform-origin:0 0;">Sign in</div><svg class="r" style="left:1461px;top:0px;" width="14" height="10" viewBox="0 0 14 10"><rect x="1" y="0" width="12" height="9" fill="none" stroke="#fff" stroke-width="1"/><path d="M1 3.5 H13" stroke="#fff" stroke-width="1"/><path d="M4 6 H10 M5.5 5 L4 6 L5.5 7 M8.5 5 L10 6 L8.5 7" stroke="#fff" stroke-width="0.9" fill="none"/></svg><div class="r" style="left:1500px;top:4px;width:10px;height:1px;background:#fff;"></div><svg class="r" style="left:1539px;top:0px;" width="11" height="9" viewBox="0 0 11 9"><rect x="0.5" y="2.5" width="6.5" height="6" fill="none" stroke="#fff" stroke-width="1"/><path d="M2.5 2.5 V0.5 H9.5 V6.5 H7" fill="none" stroke="#fff" stroke-width="1"/></svg><svg class="r" style="left:1577px;top:0px;" width="11" height="9" viewBox="0 0 11 9"><path d="M0.5 0 L9.5 8.5 M9.5 0 L0.5 8.5" stroke="#fff" stroke-width="1.1"/></svg><div class="r" style="left:51px;top:20px;width:48px;height:25px;background:#F3F3F3;"></div><div class="t" style="top:26.69px;font:11px/11px 'Liberation Sans',sans-serif;color:#FFFFFF;left:17px;transform:scaleX(0.8466);transform-origin:0 0;">File</div><div class="t" style="top:26.69px;font:11px/11px 'Liberation Sans',sans-serif;color:#217346;left:61px;transform:scaleX(0.9542);transform-origin:0 0;">Home</div><div class="t" style="top:26.69px;font:11px/11px 'Liberation Sans',sans-serif;color:#FFFFFF;left:111px;transform:scaleX(0.8717);transform-origin:0 0;">Insert</div><div class="t" style="top:26.69px;font:11px/11px 'Liberation Sans',sans-serif;color:#FFFFFF;left:158px;transform:scaleX(0.8732);transform-origin:0 0;">Page Layout</div><div class="t" style="top:26.69px;font:11px/11px 'Liberation Sans',sans-serif;color:#FFFFFF;left:235px;transform:scaleX(0.8725);transform-origin:0 0;">Formulas</div><div class="t" style="top:26.69px;font:11px/11px 'Liberation Sans',sans-serif;color:#FFFFFF;left:298px;transform:scaleX(0.8602);transform-origin:0 0;">Data</div><div class="t" style="top:26.69px;font:11px/11px 'Liberation Sans',sans-serif;color:#FFFFFF;left:341px;transform:scaleX(0.8596);transform-origin:0 0;">Review</div><div class="t" style="top:26.69px;font:11px/11px 'Liberation Sans',sans-serif;color:#FFFFFF;left:394px;transform:scaleX(0.8460);transform-origin:0 0;">View</div><div class="t" style="top:26.69px;font:11px/11px 'Liberation Sans',sans-serif;color:#FFFFFF;left:437px;transform:scaleX(0.9282);transform-origin:0 0;">Help</div><svg class="r" style="left:481px;top:24px;" width="10" height="15" viewBox="0 0 10 15"><path d="M5 1 A4 4 0 0 1 9 5 C9 7 7.3 8 7 10 H3 C2.7 8 1 7 1 5 A4 4 0 0 1 5 1 Z M3.3 11.5 H6.7 M3.8 13.5 H6.2" fill="none" stroke="#fff" stroke-width="1"/></svg><div class="t" style="top:26.69px;font:11px/11px 'Liberation Sans',sans-serif;color:#FFFFFF;left:496px;transform:scaleX(0.9202);transform-origin:0 0;">Tell me what you want to do</div><svg class="r" style="left:1541px;top:25px;" width="12" height="13" viewBox="0 0 12 13"><circle cx="6" cy="4" r="3.3" fill="none" stroke="#fff" stroke-width="1.1"/><path d="M0.8 12.5 C1.5 9 3.5 7.5 6 7.5 C7 7.5 8 7.8 8.7 8.3" fill="none" stroke="#fff" stroke-width="1.1"/><path d="M9.5 8.5 V12.5 M7.5 10.5 H11.5" stroke="#fff" stroke-width="1"/></svg><div class="t" style="top:26.69px;font:11px/11px 'Liberation Sans',sans-serif;color:#FFFFFF;left:1558px;transform:scaleX(0.8170);transform-origin:0 0;">Share</div><svg class="r" style="left:10px;top:51px;" width="26" height="27" viewBox="0 0 26 27"><rect x="1" y="3" width="20" height="22" rx="1.5" fill="#E8BE6E"/><rect x="6" y="1.5" width="10" height="3.5" rx="1" fill="#6f6f6f"/><rect x="9" y="0" width="4" height="3" rx="1" fill="#6f6f6f"/><path d="M12.5 12 H20 L24.5 16.5 V26 H12.5 Z" fill="#fff" stroke="#7a7a7a" stroke-width="1"/></svg><div class="t" style="top:80.53px;font:10px/10px 'Liberation Sans',sans-serif;color:#444444;left:10px;transform:scaleX(0.8797);transform-origin:0 0;">Paste</div><svg class="r" style="left:18px;top:97px;" width="5" height="3" viewBox="0 0 5 3"><path d="M0 0 H5 L2.5 3 Z" fill="#666"/></svg><svg class="r" style="left:40px;top:49px;" width="15" height="15" viewBox="0 0 15 15"><path d="M3.5 1 L10 10 M11.5 1 L5 10" stroke="#555" stroke-width="1.4"/><circle cx="3.8" cy="11.5" r="2.3" fill="none" stroke="#4F8AC9" stroke-width="1.3"/><circle cx="11" cy="11.5" r="2.3" fill="none" stroke="#4F8AC9" stroke-width="1.3"/></svg><div class="t" style="top:52.53px;font:10px/10px 'Liberation Sans',sans-serif;color:#444444;left:57px;transform:scaleX(0.9639);transform-origin:0 0;">Cut</div><svg class="r" style="left:40px;top:69px;" width="15" height="14" viewBox="0 0 15 14"><path d="M1 1 H6 L7.5 2.5 V10 H1 Z" fill="#fff" stroke="#777" stroke-width="1"/><path d="M6 4.5 H10.5 L13.5 7.5 V13.5 H6 Z" fill="#fff" stroke="#777" stroke-width="1"/><rect x="7.5" y="9" width="4.5" height="3" fill="#7FAEDD"/><path d="M2.5 4 H4.5 M2.5 6.5 H5" stroke="#4F8AC9" stroke-width="0.9"/></svg><div class="t" style="top:71.53px;font:10px/10px 'Liberation Sans',sans-serif;color:#444444;left:57px;transform:scaleX(0.9853);transform-origin:0 0;">Copy</div><svg class="r" style="left:88px;top:75px;" width="5" height="3" viewBox="0 0 5 3"><path d="M0 0 H5 L2.5 3 Z" fill="#666"/></svg><svg class="r" style="left:40px;top:88px;" width="15" height="14" viewBox="0 0 15 14"><path d="M1 9 L6 4.5 L10 8.5 L5.5 13 Z" fill="#E8BE6E"/><path d="M6.5 5 L10 2 L12 4 L9 7.5 Z" fill="#6f6f6f"/><path d="M10.5 1.5 L12.5 0 L14.5 2 L12.5 3.5 Z" fill="#6f6f6f"/></svg><div class="t" style="top:90.53px;font:10px/10px 'Liberation Sans',sans-serif;color:#444444;left:57px;transform:scaleX(0.9828);transform-origin:0 0;">Format Painter</div><div class="t" style="top:110.53px;font:10px/10px 'Liberation Sans',sans-serif;color:#444444;left:38px;transform:scaleX(0.9814);transform-origin:0 0;">Clipboard</div><svg class="r" style="left:120px;top:113px;" width="7" height="7" viewBox="0 0 7 7"><path d="M0.5 6 V0.5 H6" fill="none" stroke="#9a9a9a" stroke-width="1"/><path d="M2.5 2.5 L6.5 6.5 M6.5 3.5 V6.5 H3.5" fill="none" stroke="#777" stroke-width="1"/></svg><div class="r" style="left:131px;top:49px;width:1px;height:69px;background:#D5D5D5;"></div><div class="r" style="left:135px;top:54px;width:93px;height:19px;background:#FFFFFF;border:1px solid #C6C6C6;"></div><div class="r" style="left:227px;top:54px;width:37px;height:19px;background:#FFFFFF;border:1px solid #C6C6C6;"></div><div class="t" style="top:59.53px;font:10px/10px 'Liberation Sans',sans-serif;color:#444444;left:138px;transform:scaleX(0.9737);transform-origin:0 0;">Times New Roma</div><svg class="r" style="left:219px;top:63px;" width="5" height="3" viewBox="0 0 5 3"><path d="M0 0 H5 L2.5 3 Z" fill="#555"/></svg><div class="t" style="top:59.53px;font:10px/10px 'Liberation Sans',sans-serif;color:#444444;left:230px;transform:scaleX(0.7699);transform-origin:0 0;">11</div><svg class="r" style="left:254px;top:63px;" width="5" height="3" viewBox="0 0 5 3"><path d="M0 0 H5 L2.5 3 Z" fill="#555"/></svg><div class="t" style="top:57.00px;font:13px/13px 'Liberation Sans',sans-serif;color:#555;left:269px;transform:scaleX(1.0378);transform-origin:0 0;">A</div><svg class="r" style="left:277px;top:57px;" width="5" height="3" viewBox="0 0 5 3"><path d="M0 3 L2.5 0 L5 3 Z" fill="#4F8AC9"/></svg><div class="t" style="top:59.53px;font:10px/10px 'Liberation Sans',sans-serif;color:#555;left:288px;transform:scaleX(1.0492);transform-origin:0 0;">A</div><svg class="r" style="left:294px;top:57px;" width="5" height="3" viewBox="0 0 5 3"><path d="M0 0 H5 L2.5 3 Z" fill="#4F8AC9"/></svg><div class="t" style="top:83.84px;font:bold 12px/12px 'Liberation Sans',sans-serif;color:#444;left:140px;transform:scaleX(0.8072);transform-origin:0 0;">B</div><div class="t" style="top:83.84px;font:italic 12px/12px 'Liberation Sans',sans-serif;color:#444;left:159px;transform:scaleX(1.8028);transform-origin:0 0;">I</div><div class="t" style="top:82.84px;font:12px/12px 'Liberation Sans',sans-serif;color:#444;left:176px;transform:scaleX(0.9225);transform-origin:0 0;">U</div><div class="r" style="left:176px;top:95px;width:8px;height:1px;background:#666;"></div><svg class="r" style="left:192px;top:89px;" width="5" height="3" viewBox="0 0 5 3"><path d="M0 0 H5 L2.5 3 Z" fill="#666"/></svg><div class="r" style="left:204px;top:81px;width:1px;height:17px;background:#D0D0D0;"></div><svg class="r" style="left:211px;top:83px;" width="12" height="12" viewBox="0 0 12 12"><rect x="0.5" y="0.5" width="11" height="11" fill="none" stroke="#9a9a9a" stroke-width="1" stroke-dasharray="1 1"/><path d="M6 0.5 V11.5 M0.5 6 H11.5" stroke="#9a9a9a" stroke-width="1" stroke-dasharray="1 1"/><path d="M0.5 11.5 H11.5" stroke="#777" stroke-width="1"/></svg><svg class="r" style="left:228px;top:89px;" width="5" height="3" viewBox="0 0 5 3"><path d="M0 0 H5 L2.5 3 Z" fill="#666"/></svg><div class="r" style="left:239px;top:81px;width:1px;height:17px;background:#D0D0D0;"></div><svg class="r" style="left:245px;top:82px;" width="15" height="14" viewBox="0 0 15 14"><path d="M3 6 L7.5 1.5 L12 6 L7.5 10.5 Z" fill="#fff" stroke="#666" stroke-width="1"/><path d="M12.5 6.5 C14 8 14 9.5 13 10" fill="none" stroke="#4F8AC9" stroke-width="1.6"/></svg><div class="r" style="left:246px;top:92px;width:14px;height:4px;background:#FFFF00;"></div><svg class="r" style="left:263px;top:89px;" width="5" height="3" viewBox="0 0 5 3"><path d="M0 0 H5 L2.5 3 Z" fill="#666"/></svg><div class="t" style="top:82.27px;font:11.5px/11.5px 'Liberation Sans',sans-serif;color:#444;left:275.5px;transform:scaleX(1.4338);transform-origin:0 0;">A</div><div class="r" style="left:274px;top:92px;width:14px;height:4px;background:#FF0000;"></div><svg class="r" style="left:293px;top:89px;" width="5" height="3" viewBox="0 0 5 3"><path d="M0 0 H5 L2.5 3 Z" fill="#666"/></svg><div class="t" style="top:110.53px;font:10px/10px 'Liberation Sans',sans-serif;color:#444444;left:202px;transform:scaleX(0.9493);transform-origin:0 0;">Font</div><svg class="r" style="left:295px;top:113px;" width="7" height="7" viewBox="0 0 7 7"><path d="M0.5 6 V0.5 H6" fill="none" stroke="#9a9a9a" stroke-width="1"/><path d="M2.5 2.5 L6.5 6.5 M6.5 3.5 V6.5 H3.5" fill="none" stroke="#777" stroke-width="1"/></svg><div class="r" style="left:303px;top:49px;width:1px;height:69px;background:#D5D5D5;"></div><svg class="r" style="left:311px;top:55px;" width="14" height="7" viewBox="0 0 14 7"><rect x="0" y="0" width="11" height="1" fill="#777"/><rect x="0" y="3" width="11" height="1" fill="#777"/></svg><div class="r" style="left:326px;top:54px;width:18px;height:19px;background:#C8C8C8;"></div><svg class="r" style="left:329px;top:60px;" width="14" height="10" viewBox="0 0 14 10"><rect x="0" y="0" width="11" height="1" fill="#777"/><rect x="0" y="3" width="11" height="1" fill="#777"/><rect x="0" y="6" width="11" height="1" fill="#777"/></svg><svg class="r" style="left:348px;top:64px;" width="14" height="10" viewBox="0 0 14 10"><rect x="0" y="0" width="11" height="1" fill="#777"/><rect x="0" y="3" width="11" height="1" fill="#777"/><rect x="0" y="6" width="11" height="1" fill="#777"/></svg><div class="r" style="left:366px;top:55px;width:1px;height:16px;background:#D0D0D0;"></div><svg class="r" style="left:372px;top:56px;" width="16" height="14" viewBox="0 0 16 14"><text x="1" y="9" font-family="Liberation Sans" font-size="8" fill="#555" transform="rotate(-40 6 7)">ab</text><path d="M5 13 L14 4" stroke="#666" stroke-width="1.2"/><path d="M12 3 L15 2 L14 5 Z" fill="#666"/></svg><svg class="r" style="left:390px;top:62px;" width="5" height="3" viewBox="0 0 5 3"><path d="M0 0 H5 L2.5 3 Z" fill="#666"/></svg><div class="r" style="left:410px;top:53px;width:1px;height:46px;background:#D0D0D0;"></div><div class="r" style="left:414px;top:54px;width:68px;height:19px;background:#C8C8C8;"></div><svg class="r" style="left:418px;top:56px;" width="11" height="14" viewBox="0 0 11 14"><text x="0" y="6" font-family="Liberation Sans" font-size="7" fill="#555">ab</text><text x="0" y="13" font-family="Liberation Sans" font-size="7" fill="#555">c</text><path d="M5 11 L7 13 L10 9" stroke="#4F8AC9" stroke-width="1" fill="none"/></svg><div class="t" style="top:59.53px;font:10px/10px 'Liberation Sans',sans-serif;color:#444444;left:433px;transform:scaleX(0.9632);transform-origin:0 0;">Wrap Text</div><svg class="r" style="left:311px;top:85px;" width="14" height="13" viewBox="0 0 14 13"><rect x="0" y="0" width="11" height="1" fill="#777"/><rect x="0" y="3" width="8" height="1" fill="#777"/><rect x="0" y="6" width="11" height="1" fill="#777"/><rect x="0" y="9" width="8" height="1" fill="#777"/></svg><svg class="r" style="left:329px;top:85px;" width="14" height="13" viewBox="0 0 14 13"><rect x="0" y="0" width="11" height="1" fill="#777"/><rect x="1.5" y="3" width="8" height="1" fill="#777"/><rect x="0" y="6" width="11" height="1" fill="#777"/><rect x="1.5" y="9" width="8" height="1" fill="#777"/></svg><div class="r" style="left:344px;top:80px;width:19px;height:19px;background:#C8C8C8;"></div><svg class="r" style="left:347px;top:85px;" width="14" height="13" viewBox="0 0 14 13"><rect x="0" y="0" width="11" height="1" fill="#777"/><rect x="3" y="3" width="8" height="1" fill="#777"/><rect x="0" y="6" width="11" height="1" fill="#777"/><rect x="3" y="9" width="8" height="1" fill="#777"/></svg><div class="r" style="left:366px;top:81px;width:1px;height:16px;background:#D0D0D0;"></div><svg class="r" style="left:372px;top:83px;" width="15" height="12" viewBox="0 0 15 12"><path d="M0.5 0.5 H14 M7 4 H14 M7 7 H14 M0.5 10.5 H14" stroke="#777" stroke-width="1"/><path d="M5.5 5.5 H1 M3 3.5 L1 5.5 L3 7.5" stroke="#4F8AC9" stroke-width="1.4" fill="none"/></svg><svg class="r" style="left:391px;top:83px;" width="15" height="12" viewBox="0 0 15 12"><path d="M0.5 0.5 H14 M7 4 H14 M7 7 H14 M0.5 10.5 H14" stroke="#777" stroke-width="1"/><path d="M0.5 5.5 H5.5 M3.5 3.5 L5.5 5.5 L3.5 7.5" stroke="#4F8AC9" stroke-width="1.4" fill="none"/></svg><svg class="r" style="left:416px;top:82px;" width="14" height="14" viewBox="0 0 14 14"><rect x="0.5" y="0.5" width="13" height="13" fill="#fff" stroke="#777" stroke-width="1"/><path d="M0.5 4 H13.5 M0.5 10 H13.5 M7 0.5 V4 M7 10 V13.5" stroke="#999" stroke-width="1"/><path d="M3 7 H11 M4.5 5.5 L3 7 L4.5 8.5 M9.5 5.5 L11 7 L9.5 8.5" stroke="#4F8AC9" stroke-width="1" fill="none"/></svg><div class="t" style="top:85.53px;font:10px/10px 'Liberation Sans',sans-serif;color:#444444;left:433px;transform:scaleX(1.0058);transform-origin:0 0;">Merge &amp; Center</div><svg class="r" style="left:513px;top:89px;" width="5" height="3" viewBox="0 0 5 3"><path d="M0 0 H5 L2.5 3 Z" fill="#666"/></svg><div class="t" style="top:110.53px;font:10px/10px 'Liberation Sans',sans-serif;color:#444444;left:385px;transform:scaleX(0.9895);transform-origin:0 0;">Alignment</div><svg class="r" style="left:516px;top:113px;" width="7" height="7" viewBox="0 0 7 7"><path d="M0.5 6 V0.5 H6" fill="none" stroke="#9a9a9a" stroke-width="1"/><path d="M2.5 2.5 L6.5 6.5 M6.5 3.5 V6.5 H3.5" fill="none" stroke="#777" stroke-width="1"/></svg><div class="r" style="left:524px;top:49px;width:1px;height:69px;background:#D5D5D5;"></div><div class="r" style="left:528px;top:54px;width:109px;height:19px;background:#FFFFFF;border:1px solid #C6C6C6;"></div><div class="t" style="top:59.53px;font:10px/10px 'Liberation Sans',sans-serif;color:#444444;left:531px;transform:scaleX(0.9868);transform-origin:0 0;">Custom</div><svg class="r" style="left:627px;top:63px;" width="5" height="3" viewBox="0 0 5 3"><path d="M0 0 H5 L2.5 3 Z" fill="#555"/></svg><div class="t" style="top:84.00px;font:13px/13px 'Liberation Sans',sans-serif;color:#555;left:534px;transform:scaleX(0.9676);transform-origin:0 0;">$</div><svg class="r" style="left:549px;top:89px;" width="5" height="3" viewBox="0 0 5 3"><path d="M0 0 H5 L2.5 3 Z" fill="#666"/></svg><div class="t" style="top:83.84px;font:12px/12px 'Liberation Sans',sans-serif;color:#555;left:560px;transform:scaleX(1.0307);transform-origin:0 0;">%</div><div class="t" style="top:79.46px;font:bold 16px/16px 'Liberation Sans',sans-serif;color:#555;left:581px;transform:scaleX(1.1228);transform-origin:0 0;">,</div><div class="r" style="left:597px;top:81px;width:1px;height:17px;background:#D0D0D0;"></div><svg class="r" style="left:602px;top:83px;" width="14" height="13" viewBox="0 0 14 13"><path d="M5 3 H1 M3 1 L1 3 L3 5" stroke="#4F8AC9" stroke-width="1.2" fill="none"/><text x="7" y="6" font-family="Liberation Sans" font-size="6" fill="#666">.0</text><text x="5" y="12" font-family="Liberation Sans" font-size="6" fill="#666">.00</text></svg><svg class="r" style="left:620px;top:83px;" width="14" height="13" viewBox="0 0 14 13"><text x="5" y="6" font-family="Liberation Sans" font-size="6" fill="#666">.00</text><path d="M1 9.5 H5 M3 7.5 L5 9.5 L3 11.5" stroke="#4F8AC9" stroke-width="1.2" fill="none"/><text x="7" y="12" font-family="Liberation Sans" font-size="6" fill="#666">.0</text></svg><div class="t" style="top:110.53px;font:10px/10px 'Liberation Sans',sans-serif;color:#444444;left:559px;transform:scaleX(0.9561);transform-origin:0 0;">Number</div><svg class="r" style="left:633px;top:113px;" width="7" height="7" viewBox="0 0 7 7"><path d="M0.5 6 V0.5 H6" fill="none" stroke="#9a9a9a" stroke-width="1"/><path d="M2.5 2.5 L6.5 6.5 M6.5 3.5 V6.5 H3.5" fill="none" stroke="#777" stroke-width="1"/></svg><div class="r" style="left:641px;top:49px;width:1px;height:69px;background:#D5D5D5;"></div><svg class="r" style="left:662px;top:51px;" width="27" height="27" viewBox="0 0 27 27"><g stroke="#9a9a9a" stroke-width="1" fill="#fff"><rect x="0.5" y="0.5" width="24" height="20"/></g><path d="M0.5 5.5 H24.5 M0.5 10.5 H24.5 M0.5 15.5 H24.5 M6.5 0.5 V20.5 M12.5 0.5 V20.5 M18.5 0.5 V20.5" stroke="#b0b0b0" stroke-width="1"/><rect x="7" y="1" width="5" height="4" fill="#E06A3B"/><rect x="7" y="6" width="11" height="4" fill="#4F8AC9"/><rect x="7" y="11" width="8" height="4" fill="#E06A3B"/><rect x="7" y="16" width="4" height="4" fill="#4F8AC9"/><rect x="12.5" y="14.5" width="12" height="11" fill="#fff" stroke="#666" stroke-width="1"/><text x="15" y="23.5" font-family="Liberation Sans" font-size="10" fill="#555">&#8800;</text></svg><div class="t" style="top:80.53px;font:10px/10px 'Liberation Sans',sans-serif;color:#444444;left:649px;transform:scaleX(1.0194);transform-origin:0 0;">Conditional</div><div class="t" style="top:93.53px;font:10px/10px 'Liberation Sans',sans-serif;color:#444444;left:647px;transform:scaleX(1.0252);transform-origin:0 0;">Formatting</div><svg class="r" style="left:698px;top:97.5px;" width="4" height="3" viewBox="0 0 4 3"><path d="M0 0 H4 L2.0 3 Z" fill="#666"/></svg><svg class="r" style="left:716px;top:52px;" width="28" height="27" viewBox="0 0 28 27"><rect x="0.5" y="1.5" width="20" height="16" fill="#fff" stroke="#9a9a9a"/><path d="M0.5 5.5 H20.5 M0.5 9.5 H20.5 M0.5 13.5 H20.5 M5.5 1.5 V17.5 M10.5 1.5 V17.5 M15.5 1.5 V17.5" stroke="#b0b0b0"/><rect x="6" y="6" width="14" height="11" fill="#B9D3EE" opacity="0.9"/><path d="M14 22 L24 9 L27 11 L18 23 Z" fill="#666"/><path d="M11 26 C11 22 13 20 16 21 L18 23 C17 26 14 27 11 26 Z" fill="#4F8AC9"/></svg><div class="t" style="top:80.53px;font:10px/10px 'Liberation Sans',sans-serif;color:#444444;left:706px;transform:scaleX(0.9774);transform-origin:0 0;">Format as</div><div class="t" style="top:93.53px;font:10px/10px 'Liberation Sans',sans-serif;color:#444444;left:714px;transform:scaleX(1.0039);transform-origin:0 0;">Table</div><svg class="r" style="left:739px;top:97.5px;" width="4" height="3" viewBox="0 0 4 3"><path d="M0 0 H4 L2.0 3 Z" fill="#666"/></svg><div class="r" style="left:753px;top:50px;width:457px;height:52px;background:#FFFFFF;border:1px solid #C6C6C6;"></div><div class="r" style="left:1197px;top:51px;width:1px;height:50px;background:#DADADA;"></div><div class="r" style="left:1197px;top:67px;width:12px;height:1px;background:#DADADA;"></div><div class="r" style="left:1197px;top:84px;width:12px;height:1px;background:#DADADA;"></div><svg class="r" style="left:1200px;top:57px;" width="7" height="4" viewBox="0 0 7 4"><path d="M0 4 L3.5 0 L7 4 Z" fill="#666"/></svg><svg class="r" style="left:1200px;top:74px;" width="7" height="4" viewBox="0 0 7 4"><path d="M0 0 H7 L3.5 4 Z" fill="#666"/></svg><svg class="r" style="left:1200px;top:90px;" width="7" height="6" viewBox="0 0 7 6"><path d="M0 0.5 H7" stroke="#666"/><path d="M0 2 H7 L3.5 6 Z" fill="#666"/></svg><svg class="r" style="left:761px;top:57px;" width="12" height="12" viewBox="0 0 12 12"><path d="M2 1 H9 V4 M2.5 2.6 H9 M6 4 V6.3 M0.5 6.3 H11.5 M2.5 8 H9.5 V11.5 H2.5 Z" fill="none" stroke="#333" stroke-width="1.1"/></svg><svg class="r" style="left:775px;top:57px;" width="12" height="12" viewBox="0 0 12 12"><path d="M0.8 2.5 H6 V9.5 H0.8 Z M9.2 0 V12 M9.2 5.5 H11.8" fill="none" stroke="#333" stroke-width="1.1"/></svg><div class="t" style="top:57.84px;font:12px/12px 'Liberation Sans',sans-serif;color:#333;left:796px;transform:scaleX(1.1254);transform-origin:0 0;">[0]</div><div class="t" style="top:58.69px;font:11px/11px 'Liberation Sans',sans-serif;color:#333;left:817px;transform:scaleX(0.9143);transform-origin:0 0;">. . .</div><svg class="r" style="left:849px;top:57px;" width="12" height="12" viewBox="0 0 12 12"><path d="M2 1 H9 V4 M2.5 2.6 H9 M6 4 V6.3 M0.5 6.3 H11.5 M2.5 8 H9.5 V11.5 H2.5 Z" fill="none" stroke="#333" stroke-width="1.1"/></svg><svg class="r" style="left:863px;top:57px;" width="12" height="12" viewBox="0 0 12 12"><path d="M0.8 2.5 H6 V9.5 H0.8 Z M9.2 0 V12 M9.2 5.5 H11.8" fill="none" stroke="#333" stroke-width="1.1"/></svg><div class="r" style="left:876px;top:68px;width:6px;height:1px;background:#333;"></div><svg class="r" style="left:887px;top:57px;" width="12" height="12" viewBox="0 0 12 12"><path d="M1 1.5 V10 H6 V1.5 M1 5.5 H6 M9.5 0 V12" fill="none" stroke="#333" stroke-width="1.1"/></svg><div class="t" style="top:58.69px;font:11px/11px 'Liberation Sans',sans-serif;color:#333;left:903px;transform:scaleX(1.0449);transform-origin:0 0;">. . .</div><svg class="r" style="left:937px;top:57px;" width="12" height="12" viewBox="0 0 12 12"><path d="M2 0.8 H9.5 M2 0.8 V4.5 H9.5 M2 2.7 H9 M5.8 4.5 V6 M0.5 6 H11.5 M6 7.5 A3 2.1 0 1 0 6.01 7.5 Z" fill="none" stroke="#333" stroke-width="1.1"/></svg><svg class="r" style="left:951px;top:57px;" width="12" height="12" viewBox="0 0 12 12"><path d="M3.5 0.5 V1.5 M0.8 2 H6.5 M3.6 4.2 A2 1.6 0 1 0 3.61 4.2 Z M3.6 7.5 V9 M0.5 9.5 H7.5 M9.5 0 V12 M9.5 5 H11.8" fill="none" stroke="#333" stroke-width="1.1"/></svg><div class="t" style="top:57.84px;font:12px/12px 'Liberation Sans',sans-serif;color:#333;left:963px;transform:scaleX(1.1091);transform-origin:0 0;">_1202</div><svg class="r" style="left:1026px;top:57px;" width="12" height="12" viewBox="0 0 12 12"><path d="M1 1 H11 M4 1 V4.5 M8 1 V4.5 M1 4.5 H11 M4 4.5 V7.5 M8 4.5 V7.5 M0.5 7.5 H11.5 M0.5 11 H11.5" fill="none" stroke="#333" stroke-width="1.1"/></svg><svg class="r" style="left:1040px;top:57px;" width="12" height="12" viewBox="0 0 12 12"><path d="M1.5 0.8 H10.5 M6 0.8 L1.5 4.5 M6 1.5 L10.5 4.5 M0.5 6 H11.5 M6 6 V8 M2 8.5 V11.5 H10.5" fill="none" stroke="#333" stroke-width="1.1"/></svg><div class="t" style="top:57.84px;font:12px/12px 'Liberation Sans',sans-serif;color:#333;left:1053px;transform:scaleX(0.6559);transform-origin:0 0;">_(</div><svg class="r" style="left:1061px;top:57px;" width="12" height="12" viewBox="0 0 12 12"><path d="M0.8 1 H6.5 M3.8 1 L0.8 6 M3.8 2 L6.8 5.5 M9.8 0 V7 M7.5 3.5 H9.8 M6 8.2 A3 1.9 0 1 0 6.01 8.2 Z" fill="none" stroke="#333" stroke-width="1.1"/></svg><svg class="r" style="left:1075px;top:57px;" width="12" height="12" viewBox="0 0 12 12"><path d="M2.5 0.8 V6 H9.5 V0.8 M2.5 3.3 H9.5 M6 6 V9 M0.5 9.5 H11.5" fill="none" stroke="#333" stroke-width="1.1"/></svg><div class="t" style="top:60.38px;font:9px/9px 'Liberation Sans',sans-serif;color:#333;left:1090px;transform:scaleX(0.8000);transform-origin:0 0;">. . .</div><svg class="r" style="left:1113px;top:57px;" width="12" height="12" viewBox="0 0 12 12"><path d="M0.5 6 H11.5" fill="none" stroke="#333" stroke-width="1.1"/></svg><svg class="r" style="left:1126px;top:57px;" width="12" height="12" viewBox="0 0 12 12"><path d="M2.5 0.5 L1.5 4 M1 2 V11.5 M1 2 H5 V11 M2 5 L3.5 6.5 M2 8 L3.5 9.5 M0.5 7 H5.5 M7 1 V4 Q7 5 6.5 5.5 M7 1 H10 V4.5 H11.5 M6.5 7 H11 L7 11.5 M8 8.5 L11.5 11.5" fill="none" stroke="#333" stroke-width="1.1"/></svg><div class="t" style="top:57.84px;font:12px/12px 'Liberation Sans',sans-serif;color:#333;left:1139px;transform:scaleX(1.0934);transform-origin:0 0;">_00Q...</div><svg class="r" style="left:760px;top:82px;" width="10" height="11" viewBox="0 0 10 11"><path d="M9.5 0.5 Q6 2 2.5 2.5 M0.5 6 H11.5 M6 2.3 V12" fill="none" stroke="#333" stroke-width="1.1"/></svg><svg class="r" style="left:770px;top:82px;" width="10" height="11" viewBox="0 0 10 11"><path d="M4.5 0.5 Q3 4 0.5 6 M7.5 0.5 Q9 4 11.5 6 M2.5 6.5 H10 Q10 11 8 11.5 M5.5 6.5 Q5 10 2 12" fill="none" stroke="#333" stroke-width="1.1"/></svg><svg class="r" style="left:780px;top:82px;" width="10" height="11" viewBox="0 0 10 11"><path d="M3 0.5 Q2 3 0.5 5 M2.2 3.5 V12 M8 0.5 V2.5 M5 3 H11.5 M6.2 4.8 L7 9 M10.5 4.8 L9.7 9 M4.5 11.2 H11.8" fill="none" stroke="#333" stroke-width="1.1"/></svg><div class="t" style="top:82.53px;font:10px/10px 'Liberation Sans',sans-serif;color:#333;left:789px;transform:scaleX(1.0242);transform-origin:0 0;">_00Q39...</div><div class="r" style="left:843px;top:76px;width:88px;height:23px;background:#FFFFFF;border:2px solid #C6C6C6;"></div><div class="t" style="top:80.11px;font:13px/13px 'Liberation Serif',serif;color:#000;left:847px;transform:scaleX(0.9571);transform-origin:0 0;">Normal</div><div class="r" style="left:933px;top:78px;width:84px;height:19px;background:#FF99CC;"></div><div class="t" style="top:80.84px;font:12px/12px 'Liberation Sans',sans-serif;color:#800080;left:937px;transform:scaleX(0.9370);transform-origin:0 0;">Bad</div><div class="r" style="left:1022px;top:78px;width:83px;height:19px;background:#CCFFCC;"></div><div class="t" style="top:80.84px;font:12px/12px 'Liberation Sans',sans-serif;color:#008000;left:1025px;transform:scaleX(0.9201);transform-origin:0 0;">Good</div><div class="r" style="left:1110px;top:78px;width:84px;height:19px;background:#FFFF99;"></div><div class="t" style="top:80.84px;font:12px/12px 'Liberation Sans',sans-serif;color:#993300;left:1114px;transform:scaleX(0.9564);transform-origin:0 0;">Neutral</div><div class="t" style="top:110.53px;font:10px/10px 'Liberation Sans',sans-serif;color:#444444;left:915px;transform:scaleX(0.9180);transform-origin:0 0;">Styles</div><div class="r" style="left:1215px;top:49px;width:1px;height:69px;background:#D5D5D5;"></div><svg class="r" style="left:1226px;top:50px;" width="24" height="25" viewBox="0 0 24 25"><rect x="0.5" y="0.5" width="11" height="6" fill="#fff" stroke="#888"/><path d="M6 0.5 V6.5" stroke="#888"/><rect x="9.5" y="8.5" width="12" height="5" fill="#C5D9EE" stroke="#8aa"/><path d="M15.5 8.5 V13.5" stroke="#8aa"/><path d="M8 11 H2 M4 9 L2 11 L4 13" stroke="#4F8AC9" stroke-width="1.4" fill="none"/><rect x="0.5" y="15.5" width="11" height="8" fill="#fff" stroke="#888"/><path d="M6 15.5 V23.5 M0.5 19.5 H11.5" stroke="#888"/></svg><div class="t" style="top:80.53px;font:10px/10px 'Liberation Sans',sans-serif;color:#444444;left:1224px;transform:scaleX(0.9994);transform-origin:0 0;">Insert</div><svg class="r" style="left:1234px;top:97px;" width="4" height="3" viewBox="0 0 4 3"><path d="M0 0 H4 L2.0 3 Z" fill="#666"/></svg><svg class="r" style="left:1260px;top:50px;" width="24" height="25" viewBox="0 0 24 25"><rect x="0.5" y="0.5" width="11" height="6" fill="#fff" stroke="#888"/><path d="M6 0.5 V6.5" stroke="#888"/><rect x="4.5" y="8.5" width="10" height="5" fill="#C5D9EE" stroke="#8aa"/><path d="M13 6 L22 15 M22 6 L13 15" stroke="#E06A3B" stroke-width="1.8"/><rect x="0.5" y="15.5" width="11" height="8" fill="#fff" stroke="#888"/><path d="M6 15.5 V23.5 M0.5 19.5 H11.5" stroke="#888"/></svg><div class="t" style="top:80.53px;font:10px/10px 'Liberation Sans',sans-serif;color:#444444;left:1258px;transform:scaleX(0.9686);transform-origin:0 0;">Delete</div><svg class="r" style="left:1269px;top:97px;" width="4" height="3" viewBox="0 0 4 3"><path d="M0 0 H4 L2.0 3 Z" fill="#666"/></svg><svg class="r" style="left:1295px;top:50px;" width="24" height="25" viewBox="0 0 24 25"><path d="M1 2 H22 M1 0 V4 M22 0 V4 M3 0.5 L1 2 L3 3.5 M20 0.5 L22 2 L20 3.5" stroke="#4F8AC9" stroke-width="1" fill="none"/><rect x="0.5" y="5.5" width="22" height="17" fill="#fff" stroke="#888"/><path d="M0.5 10.5 H22.5 M0.5 15.5 H22.5 M8 5.5 V22.5 M15 5.5 V22.5" stroke="#aaa"/><rect x="8" y="10" width="7" height="6" fill="#4F8AC9"/></svg><div class="t" style="top:80.53px;font:10px/10px 'Liberation Sans',sans-serif;color:#444444;left:1291px;transform:scaleX(1.0104);transform-origin:0 0;">Format</div><svg class="r" style="left:1305px;top:97px;" width="4" height="3" viewBox="0 0 4 3"><path d="M0 0 H4 L2.0 3 Z" fill="#666"/></svg><div class="t" style="top:110.53px;font:10px/10px 'Liberation Sans',sans-serif;color:#444444;left:1262px;transform:scaleX(0.9001);transform-origin:0 0;">Cells</div><div class="r" style="left:1330px;top:49px;width:1px;height:69px;background:#D5D5D5;"></div><svg class="r" style="left:1335px;top:49px;" width="14" height="15" viewBox="0 0 14 15"><path d="M12.5 3 V1 H1.5 L7 7.5 L1.5 14 H12.5 V12" fill="none" stroke="#444" stroke-width="1.8"/></svg><div class="t" style="top:52.53px;font:10px/10px 'Liberation Sans',sans-serif;color:#444444;left:1352px;transform:scaleX(0.9966);transform-origin:0 0;">AutoSum</div><svg class="r" style="left:1401px;top:56px;" width="5" height="3" viewBox="0 0 5 3"><path d="M0 0 H5 L2.5 3 Z" fill="#666"/></svg><svg class="r" style="left:1335px;top:68px;" width="14" height="15" viewBox="0 0 14 15"><rect x="0.5" y="0.5" width="12" height="13" fill="#fff" stroke="#888"/><rect x="1" y="1" width="11" height="2" fill="#777"/><path d="M6.5 4.5 V11 M4 8.5 L6.5 11 L9 8.5" stroke="#4F8AC9" stroke-width="1.3" fill="none"/></svg><div class="t" style="top:71.53px;font:10px/10px 'Liberation Sans',sans-serif;color:#444444;left:1352px;transform:scaleX(0.9400);transform-origin:0 0;">Fill</div><svg class="r" style="left:1366px;top:75px;" width="4" height="3" viewBox="0 0 4 3"><path d="M0 0 H4 L2.0 3 Z" fill="#666"/></svg><svg class="r" style="left:1335px;top:88px;" width="14" height="13" viewBox="0 0 14 13"><path d="M1 9 L8 2 L12 6 L5 13 Z" fill="#E88BA0"/><path d="M1 9 L3.5 6.5 L7.5 10.5 L5 13 Z" fill="#F4B9C5"/></svg><div class="t" style="top:90.53px;font:10px/10px 'Liberation Sans',sans-serif;color:#444444;left:1352px;transform:scaleX(0.9209);transform-origin:0 0;">Clear</div><svg class="r" style="left:1376px;top:94px;" width="4" height="3" viewBox="0 0 4 3"><path d="M0 0 H4 L2.0 3 Z" fill="#666"/></svg><svg class="r" style="left:1413px;top:51px;" width="28" height="24" viewBox="0 0 28 24"><text x="1" y="11" font-family="Liberation Sans" font-weight="bold" font-size="12" fill="#4F8AC9">A</text><text x="1" y="23" font-family="Liberation Sans" font-weight="bold" font-size="12" fill="#A35FC7">Z</text><path d="M12 7 H26 L21 13 V20 L18 19 V13 Z" fill="#8a8a8a"/></svg><div class="t" style="top:80.53px;font:10px/10px 'Liberation Sans',sans-serif;color:#444444;left:1413px;transform:scaleX(1.0433);transform-origin:0 0;">Sort &amp;</div><div class="t" style="top:93.53px;font:10px/10px 'Liberation Sans',sans-serif;color:#444444;left:1413px;transform:scaleX(0.9902);transform-origin:0 0;">Filter</div><svg class="r" style="left:1438px;top:97.5px;" width="4" height="3" viewBox="0 0 4 3"><path d="M0 0 H4 L2.0 3 Z" fill="#666"/></svg><svg class="r" style="left:1450px;top:51px;" width="24" height="24" viewBox="0 0 24 24"><circle cx="14" cy="9" r="7" fill="none" stroke="#4F8AC9" stroke-width="2"/><path d="M9 14 L2 21" stroke="#4F8AC9" stroke-width="3" stroke-linecap="round"/></svg><div class="t" style="top:80.53px;font:10px/10px 'Liberation Sans',sans-serif;color:#444444;left:1448px;transform:scaleX(1.0378);transform-origin:0 0;">Find &amp;</div><div class="t" style="top:93.53px;font:10px/10px 'Liberation Sans',sans-serif;color:#444444;left:1446px;transform:scaleX(0.9354);transform-origin:0 0;">Select</div><svg class="r" style="left:1475px;top:97.5px;" width="4" height="3" viewBox="0 0 4 3"><path d="M0 0 H4 L2.0 3 Z" fill="#666"/></svg><div class="t" style="top:110.53px;font:10px/10px 'Liberation Sans',sans-serif;color:#444444;left:1390px;transform:scaleX(1.0465);transform-origin:0 0;">Editing</div><div class="r" style="left:1486px;top:49px;width:1px;height:69px;background:#D5D5D5;"></div><svg class="r" style="left:1584px;top:111px;" width="10" height="6" viewBox="0 0 10 6"><path d="M0.5 5.5 L5 1 L9.5 5.5" fill="none" stroke="#555" stroke-width="1.3"/></svg><svg class="r" style="left:8px;top:126px;" width="18" height="19" viewBox="0 0 18 19"><path d="M9 1 C11.5 2.5 14 3 16.5 3 V9 C16.5 13.5 13 16.5 9 18 C5 16.5 1.5 13.5 1.5 9 V3 C4 3 6.5 2.5 9 1 Z" fill="#E9BC6F"/><rect x="8" y="5" width="2" height="7" fill="#4a4a4a"/><rect x="8" y="13.5" width="2" height="2" fill="#4a4a4a"/></svg><div class="t" style="top:129.69px;font:11px/11px 'Liberation Sans',sans-serif;color:#444;left:33.5px;transform:scaleX(0.8451);transform-origin:0 0;">SECURITY WARNING</div><div class="t" style="top:129.69px;font:11px/11px 'Liberation Sans',sans-serif;color:#444;left:136.5px;transform:scaleX(0.8788);transform-origin:0 0;">Macros have been disabled.</div><div class="r" style="left:275px;top:125px;width:96px;height:19px;background:#FFFFFF;border:1px solid #C3C3C3;"></div><div class="t" style="top:129.69px;font:11px/11px 'Liberation Sans',sans-serif;color:#333;left:289px;transform:scaleX(0.8827);transform-origin:0 0;">Enable Content</div><svg class="r" style="left:1585px;top:130px;" width="9" height="9" viewBox="0 0 9 9"><path d="M1 1 L8 8 M8 1 L1 8" stroke="#555" stroke-width="1.6"/></svg><div class="r" style="left:4px;top:155px;width:85px;height:22px;background:#FFFFFF;border:1px solid #D4D4D4;"></div><div class="t" style="top:160.69px;font:11px/11px 'Liberation Sans',sans-serif;color:#333;left:10px;transform:scaleX(0.8707);transform-origin:0 0;">L26</div><svg class="r" style="left:77px;top:164px;" width="7" height="4" viewBox="0 0 7 4"><path d="M0 0 H7 L3.5 4 Z" fill="#666"/></svg><div class="r" style="left:101px;top:161px;width:1px;height:2px;background:#A8A8A8;"></div><div class="r" style="left:101px;top:165px;width:1px;height:2px;background:#A8A8A8;"></div><div class="r" style="left:101px;top:169px;width:1px;height:2px;background:#A8A8A8;"></div><div class="r" style="left:114px;top:155px;width:93px;height:22px;background:#FFFFFF;border:1px solid #D4D4D4;"></div><svg class="r" style="left:124px;top:161px;" width="10" height="10" viewBox="0 0 10 10"><path d="M1 1 L9 9 M9 1 L1 9" stroke="#AAAAAA" stroke-width="1.1"/></svg><svg class="r" style="left:154px;top:161px;" width="12" height="10" viewBox="0 0 12 10"><path d="M1 5.5 L4.5 9 L11 1.5" fill="none" stroke="#AAAAAA" stroke-width="1.2"/></svg><div class="t" style="top:159.11px;font:italic 13px/13px 'Liberation Serif',serif;color:#555;left:186px;">f</div><div class="t" style="top:163.46px;font:italic 9px/9px 'Liberation Serif',serif;color:#555;left:191px;">x</div><div class="r" style="left:208px;top:155px;width:1390px;height:55px;background:#FFFFFF;border:1px solid #D4D4D4;"></div><div class="t" style="top:160.69px;font:11px/11px 'Liberation Sans',sans-serif;color:#333;left:218px;transform:scaleX(0.9255);transform-origin:0 0;">=H26+J26</div><svg class="r" style="left:1585px;top:162px;" width="9" height="6" viewBox="0 0 9 6"><path d="M0.5 5 L4.5 1 L8.5 5" fill="none" stroke="#666" stroke-width="1.3"/></svg><div class="r" style="left:0px;top:811px;width:1600px;height:1px;background:#C6C6C6;"></div><div class="r" style="left:0px;top:812px;width:1600px;height:22px;background:#E6E6E6;"></div><div class="r" style="left:0px;top:833px;width:1600px;height:1px;background:#D4D4D4;"></div><div class="r" style="left:0px;top:834px;width:1600px;height:18px;background:#F3F3F3;"></div><svg class="r" style="left:22px;top:818px;" width="6" height="9" viewBox="0 0 6 9"><path d="M5 0.5 L1 4.5 L5 8.5 Z" fill="#C0C0C0"/></svg><svg class="r" style="left:46px;top:818px;" width="6" height="9" viewBox="0 0 6 9"><path d="M1 0.5 L5 4.5 L1 8.5 Z" fill="#217346"/></svg><div class="r" style="left:83px;top:813px;width:1px;height:19px;background:#B0B0B0;"></div><div class="r" style="left:86px;top:813px;width:58px;height:19px;background:#FF6600;"></div><div class="t" style="top:816.69px;font:11px/11px 'Liberation Sans',sans-serif;color:#FFFFFF;left:94.3px;transform:scaleX(0.9610);transform-origin:0 0;">Đầu vào</div><div class="r" style="left:148px;top:813px;width:72px;height:19px;background:#C00000;"></div><div class="t" style="top:816.69px;font:11px/11px 'Liberation Sans',sans-serif;color:#FFFFFF;left:159.3px;transform:scaleX(0.9507);transform-origin:0 0;">Tiên lượng</div><div class="r" style="left:225px;top:813px;width:102px;height:19px;background:#C00000;"></div><div class="t" style="top:816.69px;font:11px/11px 'Liberation Sans',sans-serif;color:#FFFFFF;left:235.3px;transform:scaleX(0.9713);transform-origin:0 0;">Tổng hợp KPHM</div><div class="r" style="left:330px;top:813px;width:86px;height:19px;background:#C00000;"></div><div class="t" style="top:816.69px;font:11px/11px 'Liberation Sans',sans-serif;color:#FFFFFF;left:339.5px;transform:scaleX(0.9778);transform-origin:0 0;">ĐG Tổng hợp</div><div class="r" style="left:420px;top:813px;width:67px;height:19px;background:#C00000;"></div><div class="t" style="top:816.69px;font:11px/11px 'Liberation Sans',sans-serif;color:#FFFFFF;left:429.5px;transform:scaleX(0.9549);transform-origin:0 0;">Chiết tính</div><div class="r" style="left:490px;top:813px;width:56px;height:19px;background:#C00000;"></div><div class="t" style="top:816.69px;font:11px/11px 'Liberation Sans',sans-serif;color:#FFFFFF;left:499.5px;transform:scaleX(0.9804);transform-origin:0 0;">Vật liệu</div><div class="r" style="left:550px;top:813px;width:82px;height:19px;background:#C00000;"></div><div class="t" style="top:816.69px;font:11px/11px 'Liberation Sans',sans-serif;color:#FFFFFF;left:561.3px;transform:scaleX(0.9221);transform-origin:0 0;">Phân tích VT</div><div class="r" style="left:636px;top:813px;width:50px;height:19px;background:#FFCC99;"></div><div class="t" style="top:816.69px;font:11px/11px 'Liberation Sans',sans-serif;color:#444444;left:645px;transform:scaleX(0.8958);transform-origin:0 0;">Giá TB</div><div class="t" style="top:816.69px;font:11px/11px 'Liberation Sans',sans-serif;color:#555555;left:698.8px;transform:scaleX(0.9859);transform-origin:0 0;">Nhân công</div><div class="r" style="left:823px;top:813px;width:61px;height:19px;background:#FFFFCC;"></div><div class="t" style="top:816.69px;font:11px/11px 'Liberation Sans',sans-serif;color:#444444;left:833.8px;transform:scaleX(0.9548);transform-origin:0 0;">Dự thầu</div><div class="t" style="top:816.69px;font:11px/11px 'Liberation Sans',sans-serif;color:#555555;left:896.3px;transform:scaleX(0.8669);transform-origin:0 0;">THCPXD</div><div class="t" style="top:816.69px;font:11px/11px 'Liberation Sans',sans-serif;color:#555555;left:960px;transform:scaleX(0.8906);transform-origin:0 0;">THKP957</div><div class="t" style="top:816.69px;font:11px/11px 'Liberation Sans',sans-serif;color:#555555;left:1024.5px;transform:scaleX(0.9462);transform-origin:0 0;">QD957</div><div class="t" style="top:816.69px;font:11px/11px 'Liberation Sans',sans-serif;color:#555555;left:1081.6px;transform:scaleX(0.9692);transform-origin:0 0;">Thẩm định</div><div class="t" style="top:816.69px;font:11px/11px 'Liberation Sans',sans-serif;color:#555555;left:1155.4px;transform:scaleX(0.8469);transform-origin:0 0;">Bìa</div><div class="t" style="top:816.69px;font:11px/11px 'Liberation Sans',sans-serif;color:#555555;left:1192px;transform:scaleX(0.9748);transform-origin:0 0;">Tính giá N</div><div class="r" style="left:146px;top:815px;width:1px;height:16px;background:#B8B8B8;"></div><div class="r" style="left:223px;top:815px;width:1px;height:16px;background:#B8B8B8;"></div><div class="r" style="left:328px;top:815px;width:1px;height:16px;background:#B8B8B8;"></div><div class="r" style="left:417px;top:815px;width:1px;height:16px;background:#B8B8B8;"></div><div class="r" style="left:488px;top:815px;width:1px;height:16px;background:#B8B8B8;"></div><div class="r" style="left:548px;top:815px;width:1px;height:16px;background:#B8B8B8;"></div><div class="r" style="left:634px;top:815px;width:1px;height:16px;background:#B8B8B8;"></div><div class="r" style="left:688px;top:815px;width:1px;height:16px;background:#B8B8B8;"></div><div class="r" style="left:884px;top:815px;width:1px;height:16px;background:#B8B8B8;"></div><div class="r" style="left:949px;top:815px;width:1px;height:16px;background:#B8B8B8;"></div><div class="r" style="left:1015px;top:815px;width:1px;height:16px;background:#B8B8B8;"></div><div class="r" style="left:1069px;top:815px;width:1px;height:16px;background:#B8B8B8;"></div><div class="r" style="left:1145px;top:815px;width:1px;height:16px;background:#B8B8B8;"></div><div class="r" style="left:1181px;top:815px;width:1px;height:16px;background:#B8B8B8;"></div><div class="r" style="left:764px;top:811px;width:59px;height:21px;background:#FFFFFF;"></div><div class="r" style="left:764px;top:830px;width:59px;height:2px;background:#217346;"></div><div class="t" style="top:816.69px;font:bold 11px/11px 'Liberation Sans',sans-serif;color:#217346;left:773.8px;transform:scaleX(0.9712);transform-origin:0 0;">Máy TC</div><div class="t" style="top:815.84px;font:bold 12px/12px 'Liberation Sans',sans-serif;color:#217346;left:1249px;transform:scaleX(0.9014);transform-origin:0 0;">...</div><svg class="r" style="left:1268px;top:815px;" width="16" height="16" viewBox="0 0 16 16"><circle cx="8" cy="8" r="6.5" fill="none" stroke="#777" stroke-width="1.2"/><path d="M8 4.5 V11.5 M4.5 8 H11.5" stroke="#777" stroke-width="1.3"/></svg><div class="r" style="left:1300px;top:819px;width:1px;height:2px;background:#9a9a9a;"></div><div class="r" style="left:1300px;top:823px;width:1px;height:2px;background:#9a9a9a;"></div><div class="r" style="left:1300px;top:827px;width:1px;height:2px;background:#9a9a9a;"></div><div class="r" style="left:1313px;top:817px;width:271px;height:13px;background:#DADADA;border:1px solid #C6C6C6;"></div><div class="r" style="left:1314px;top:818px;width:12px;height:11px;background:#FFFFFF;"></div><svg class="r" style="left:1317px;top:820px;" width="6" height="7" viewBox="0 0 6 7"><path d="M4.5 0.5 L1 3.5 L4.5 6.5 Z" fill="#555"/></svg><div class="r" style="left:1326px;top:818px;width:92px;height:11px;background:#FFFFFF;border-left:1px solid #C6C6C6;border-right:1px solid #C6C6C6;"></div><div class="r" style="left:1571px;top:818px;width:12px;height:11px;background:#FFFFFF;border-left:1px solid #C6C6C6;"></div><svg class="r" style="left:1575px;top:820px;" width="6" height="7" viewBox="0 0 6 7"><path d="M1 0.5 L4.5 3.5 L1 6.5 Z" fill="#555"/></svg><div class="t" style="top:837.69px;font:11px/11px 'Liberation Sans',sans-serif;color:#444;left:6px;transform:scaleX(0.7859);transform-origin:0 0;">Ready</div><div class="r" style="left:1363px;top:835px;width:32px;height:17px;background:#D4D4D4;"></div><svg class="r" style="left:1372px;top:837px;" width="13" height="12" viewBox="0 0 13 12"><rect x="0.5" y="0.5" width="12" height="11" fill="none" stroke="#666"/><path d="M0.5 4 H12.5 M0.5 7.5 H12.5 M4.5 0.5 V11.5 M8.5 0.5 V11.5" stroke="#666"/></svg><svg class="r" style="left:1404px;top:837px;" width="13" height="12" viewBox="0 0 13 12"><rect x="0.5" y="0.5" width="12" height="11" fill="none" stroke="#666"/><rect x="3.5" y="3" width="6" height="6" fill="none" stroke="#666"/></svg><svg class="r" style="left:1435px;top:837px;" width="13" height="12" viewBox="0 0 13 12"><path d="M0.5 11.5 V0.5 H12.5 V7.5 H0.5 M4.5 0.5 V5 M8.5 0.5 V5" fill="none" stroke="#666"/></svg><div class="r" style="left:1461px;top:843px;width:7px;height:1px;background:#555;"></div><div class="r" style="left:1471px;top:843px;width:83px;height:1px;background:#C0C0C0;"></div><div class="r" style="left:1511px;top:839px;width:4px;height:10px;background:#555;"></div><div class="r" style="left:1555px;top:843px;width:8px;height:1px;background:#555;"></div><div class="r" style="left:1559px;top:839px;width:1px;height:9px;background:#555;"></div><div class="t" style="top:837.69px;font:11px/11px 'Liberation Sans',sans-serif;color:#444;left:1573px;transform:scaleX(0.7814);transform-origin:0 0;">100%</div>
</body></html>
